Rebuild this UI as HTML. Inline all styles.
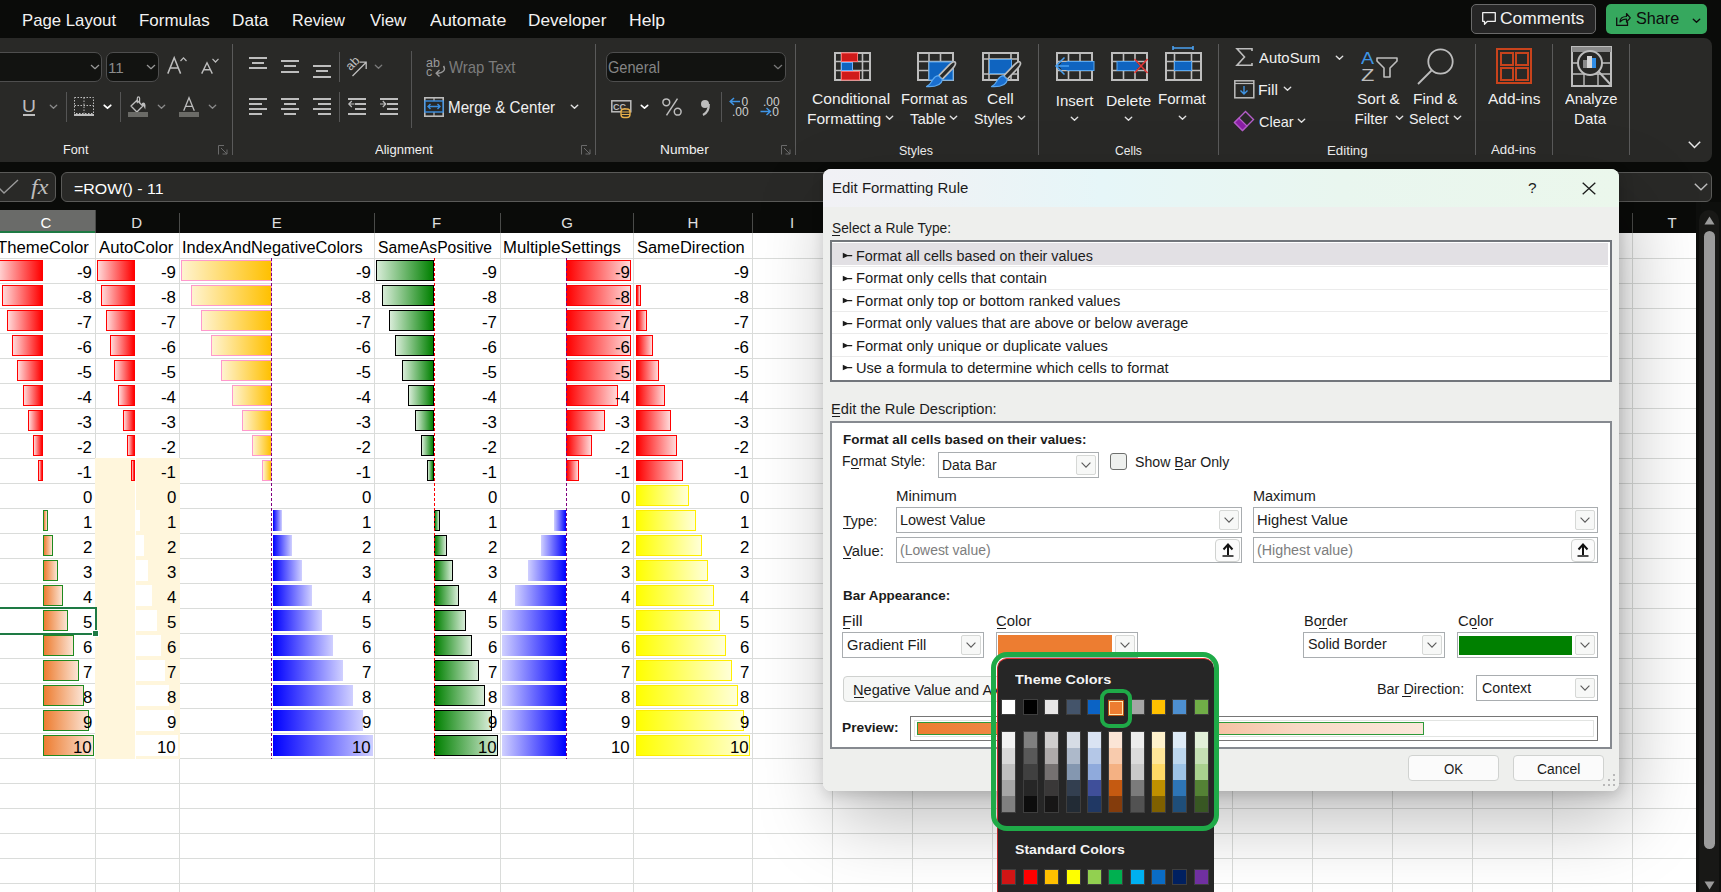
<!DOCTYPE html><html><head><meta charset="utf-8"><style>
html,body{margin:0;padding:0;}
body{width:1721px;height:892px;position:relative;overflow:hidden;background:#0a0b09;font-family:"Liberation Sans",sans-serif;}
body div{position:absolute;box-sizing:border-box;}
.t{white-space:pre;transform-origin:0 0;}
</style></head><body>
<div style="left:0px;top:0px;width:1721px;height:38px;background:#0a0b09"></div>
<div class="t" style="left:21.86px;top:11.55px;font-size:17px;line-height:17px;color:#f2f2f2;font-weight:400;font-family:'Liberation Sans',sans-serif;transform:scaleX(0.9850);">Page Layout</div>
<div class="t" style="left:138.84px;top:11.55px;font-size:17px;line-height:17px;color:#f2f2f2;font-weight:400;font-family:'Liberation Sans',sans-serif;transform:scaleX(0.9966);">Formulas</div>
<div class="t" style="left:231.92px;top:11.55px;font-size:17px;line-height:17px;color:#f2f2f2;font-weight:400;font-family:'Liberation Sans',sans-serif;transform:scaleX(1.0142);">Data</div>
<div class="t" style="left:292.01px;top:11.55px;font-size:17px;line-height:17px;color:#f2f2f2;font-weight:400;font-family:'Liberation Sans',sans-serif;transform:scaleX(0.9504);">Review</div>
<div class="t" style="left:370.12px;top:11.55px;font-size:17px;line-height:17px;color:#f2f2f2;font-weight:400;font-family:'Liberation Sans',sans-serif;transform:scaleX(0.9927);">View</div>
<div class="t" style="left:430.20px;top:11.55px;font-size:17px;line-height:17px;color:#f2f2f2;font-weight:400;font-family:'Liberation Sans',sans-serif;transform:scaleX(1.0501);">Automate</div>
<div class="t" style="left:528.02px;top:11.55px;font-size:17px;line-height:17px;color:#f2f2f2;font-weight:400;font-family:'Liberation Sans',sans-serif;transform:scaleX(1.0116);">Developer</div>
<div class="t" style="left:629.09px;top:11.55px;font-size:17px;line-height:17px;color:#f2f2f2;font-weight:400;font-family:'Liberation Sans',sans-serif;transform:scaleX(1.0336);">Help</div>
<div style="left:-20px;top:38px;width:1732px;height:124px;background:#292927;border-radius:8px"></div>
<div style="left:-20px;top:172px;width:76px;height:30px;background:#292927;border:1px solid #5a5a58;border-radius:6px"></div>
<div style="left:61px;top:172px;width:1651px;height:30px;background:#292927;border:1px solid #5a5a58;border-radius:6px"></div>
<div style="left:0px;top:210px;width:1696px;height:23px;background:#0a0b09"></div>
<div style="left:0px;top:233px;width:1696px;height:659px;background:#ffffff"></div>
<div style="left:1696px;top:202px;width:25px;height:690px;background:#0e0f0d"></div>
<div style="left:1699px;top:210px;width:20px;height:690px;background:#181816;border-radius:10px"></div>
<div style="left:1704px;top:231px;width:11px;height:618px;background:#9b9b9b;border-radius:6px"></div>
<svg style="position:absolute;left:1704px;top:216px;overflow:visible;" width="11" height="9" viewBox="0 0 11 9"><path d="M5.5 0.5 L10.5 8.5 H0.5 Z" fill="#9b9b9b"/></svg>
<svg style="position:absolute;left:1704px;top:881px;overflow:visible;" width="11" height="9" viewBox="0 0 11 9"><path d="M0.5 0.5 H10.5 L5.5 8.5 Z" fill="#9b9b9b"/></svg>
<div style="left:95px;top:233px;width:1px;height:659px;background:#dadcda"></div>
<div style="left:179px;top:233px;width:1px;height:659px;background:#dadcda"></div>
<div style="left:374px;top:233px;width:1px;height:659px;background:#dadcda"></div>
<div style="left:500px;top:233px;width:1px;height:659px;background:#dadcda"></div>
<div style="left:633px;top:233px;width:1px;height:659px;background:#dadcda"></div>
<div style="left:752px;top:233px;width:1px;height:659px;background:#dadcda"></div>
<div style="left:832px;top:233px;width:1px;height:659px;background:#dadcda"></div>
<div style="left:912px;top:233px;width:1px;height:659px;background:#dadcda"></div>
<div style="left:992px;top:233px;width:1px;height:659px;background:#dadcda"></div>
<div style="left:1072px;top:233px;width:1px;height:659px;background:#dadcda"></div>
<div style="left:1152px;top:233px;width:1px;height:659px;background:#dadcda"></div>
<div style="left:1232px;top:233px;width:1px;height:659px;background:#dadcda"></div>
<div style="left:1312px;top:233px;width:1px;height:659px;background:#dadcda"></div>
<div style="left:1392px;top:233px;width:1px;height:659px;background:#dadcda"></div>
<div style="left:1472px;top:233px;width:1px;height:659px;background:#dadcda"></div>
<div style="left:1552px;top:233px;width:1px;height:659px;background:#dadcda"></div>
<div style="left:1632px;top:233px;width:1px;height:659px;background:#dadcda"></div>
<div style="left:0px;top:258px;width:1696px;height:1px;background:#dadcda"></div>
<div style="left:0px;top:283px;width:1696px;height:1px;background:#dadcda"></div>
<div style="left:0px;top:308px;width:1696px;height:1px;background:#dadcda"></div>
<div style="left:0px;top:333px;width:1696px;height:1px;background:#dadcda"></div>
<div style="left:0px;top:358px;width:1696px;height:1px;background:#dadcda"></div>
<div style="left:0px;top:383px;width:1696px;height:1px;background:#dadcda"></div>
<div style="left:0px;top:408px;width:1696px;height:1px;background:#dadcda"></div>
<div style="left:0px;top:433px;width:1696px;height:1px;background:#dadcda"></div>
<div style="left:0px;top:458px;width:1696px;height:1px;background:#dadcda"></div>
<div style="left:0px;top:483px;width:1696px;height:1px;background:#dadcda"></div>
<div style="left:0px;top:508px;width:1696px;height:1px;background:#dadcda"></div>
<div style="left:0px;top:533px;width:1696px;height:1px;background:#dadcda"></div>
<div style="left:0px;top:558px;width:1696px;height:1px;background:#dadcda"></div>
<div style="left:0px;top:583px;width:1696px;height:1px;background:#dadcda"></div>
<div style="left:0px;top:608px;width:1696px;height:1px;background:#dadcda"></div>
<div style="left:0px;top:633px;width:1696px;height:1px;background:#dadcda"></div>
<div style="left:0px;top:658px;width:1696px;height:1px;background:#dadcda"></div>
<div style="left:0px;top:683px;width:1696px;height:1px;background:#dadcda"></div>
<div style="left:0px;top:708px;width:1696px;height:1px;background:#dadcda"></div>
<div style="left:0px;top:733px;width:1696px;height:1px;background:#dadcda"></div>
<div style="left:0px;top:758px;width:1696px;height:1px;background:#dadcda"></div>
<div style="left:0px;top:783px;width:1696px;height:1px;background:#dadcda"></div>
<div style="left:0px;top:808px;width:1696px;height:1px;background:#dadcda"></div>
<div style="left:0px;top:833px;width:1696px;height:1px;background:#dadcda"></div>
<div style="left:0px;top:858px;width:1696px;height:1px;background:#dadcda"></div>
<div style="left:0px;top:883px;width:1696px;height:1px;background:#dadcda"></div>
<div style="left:-10px;top:210px;width:106px;height:23px;background:#6a6b69"></div>
<div style="left:-10px;top:231px;width:106px;height:2px;background:#1e7a44"></div>
<div style="left:179px;top:213px;width:1px;height:20px;background:#4a4b49"></div>
<div style="left:374px;top:213px;width:1px;height:20px;background:#4a4b49"></div>
<div style="left:500px;top:213px;width:1px;height:20px;background:#4a4b49"></div>
<div style="left:633px;top:213px;width:1px;height:20px;background:#4a4b49"></div>
<div style="left:752px;top:213px;width:1px;height:20px;background:#4a4b49"></div>
<div style="left:1632px;top:213px;width:1px;height:20px;background:#4a4b49"></div>
<div style="left:95px;top:210px;width:1px;height:23px;background:#4a4b49"></div>
<div class="t" style="left:40.49px;top:215.25px;font-size:15px;line-height:15px;color:#ffffff;font-weight:400;font-family:'Liberation Sans',sans-serif;">C</div>
<div class="t" style="left:131.34px;top:215.25px;font-size:15px;line-height:15px;color:#e0e0e0;font-weight:400;font-family:'Liberation Sans',sans-serif;">D</div>
<div class="t" style="left:271.71px;top:215.25px;font-size:15px;line-height:15px;color:#e0e0e0;font-weight:400;font-family:'Liberation Sans',sans-serif;">E</div>
<div class="t" style="left:432.12px;top:215.25px;font-size:15px;line-height:15px;color:#e0e0e0;font-weight:400;font-family:'Liberation Sans',sans-serif;">F</div>
<div class="t" style="left:561.34px;top:215.25px;font-size:15px;line-height:15px;color:#e0e0e0;font-weight:400;font-family:'Liberation Sans',sans-serif;">G</div>
<div class="t" style="left:687.60px;top:215.25px;font-size:15px;line-height:15px;color:#e0e0e0;font-weight:400;font-family:'Liberation Sans',sans-serif;">H</div>
<div class="t" style="left:789.94px;top:215.25px;font-size:15px;line-height:15px;color:#e0e0e0;font-weight:400;font-family:'Liberation Sans',sans-serif;">I</div>
<div class="t" style="left:1667.42px;top:215.25px;font-size:15px;line-height:15px;color:#e0e0e0;font-weight:400;font-family:'Liberation Sans',sans-serif;">T</div>
<div class="t" style="left:-3.03px;top:239.57px;font-size:15.8px;line-height:15.8px;color:#000000;font-weight:400;font-family:'Liberation Sans',sans-serif;transform:scaleX(1.0574);">ThemeColor</div>
<div class="t" style="left:99.30px;top:239.57px;font-size:15.8px;line-height:15.8px;color:#000000;font-weight:400;font-family:'Liberation Sans',sans-serif;transform:scaleX(1.0572);">AutoColor</div>
<div class="t" style="left:181.93px;top:239.57px;font-size:15.8px;line-height:15.8px;color:#000000;font-weight:400;font-family:'Liberation Sans',sans-serif;transform:scaleX(1.0343);">IndexAndNegativeColors</div>
<div class="t" style="left:377.70px;top:239.57px;font-size:15.8px;line-height:15.8px;color:#000000;font-weight:400;font-family:'Liberation Sans',sans-serif;transform:scaleX(0.9912);">SameAsPositive</div>
<div class="t" style="left:503.16px;top:239.57px;font-size:15.8px;line-height:15.8px;color:#000000;font-weight:400;font-family:'Liberation Sans',sans-serif;transform:scaleX(1.0571);">MultipleSettings</div>
<div class="t" style="left:636.56px;top:239.57px;font-size:15.8px;line-height:15.8px;color:#000000;font-weight:400;font-family:'Liberation Sans',sans-serif;transform:scaleX(1.0400);">SameDirection</div>
<div style="left:95px;top:458px;width:85px;height:301px;background:#fff6dc"></div>
<div style="left:135px;top:458px;width:1px;height:301px;background:#ffffff"></div>
<div style="left:-3px;top:260px;width:46px;height:21px;background:linear-gradient(to left,#ff0000,#ffd9d9);border:1px solid #ff0000;"></div>
<div style="left:97px;top:260px;width:38px;height:21px;background:linear-gradient(to left,#ff0000,#ffd9d9);border:1px solid #ff0000;"></div>
<div style="left:181px;top:260px;width:91px;height:21px;background:linear-gradient(to left,#ffc000,#fff3d0);border:1px solid #ff99cc;"></div>
<div style="left:376px;top:260px;width:58px;height:21px;background:linear-gradient(to left,#008000,#d8ecd8);border:1px solid #000000;"></div>
<div style="left:566px;top:260px;width:65px;height:21px;background:linear-gradient(to right,#ff0000,#ffd9d9);border:1px solid #ff0000;"></div>
<div style="left:2px;top:285px;width:41px;height:21px;background:linear-gradient(to left,#ff0000,#ffd9d9);border:1px solid #ff0000;"></div>
<div style="left:101px;top:285px;width:34px;height:21px;background:linear-gradient(to left,#ff0000,#ffd9d9);border:1px solid #ff0000;"></div>
<div style="left:191px;top:285px;width:81px;height:21px;background:linear-gradient(to left,#ffc000,#fff3d0);border:1px solid #ff99cc;"></div>
<div style="left:382px;top:285px;width:52px;height:21px;background:linear-gradient(to left,#008000,#d8ecd8);border:1px solid #000000;"></div>
<div style="left:566px;top:285px;width:65px;height:21px;background:linear-gradient(to right,#ff0000,#ffd9d9);border:1px solid #ff0000;"></div>
<div style="left:636px;top:285px;width:5px;height:21px;background:linear-gradient(to right,#ff0000,#ffd9d9);border:1px solid #ff0000;"></div>
<div style="left:7px;top:310px;width:36px;height:21px;background:linear-gradient(to left,#ff0000,#ffd9d9);border:1px solid #ff0000;"></div>
<div style="left:106px;top:310px;width:29px;height:21px;background:linear-gradient(to left,#ff0000,#ffd9d9);border:1px solid #ff0000;"></div>
<div style="left:201px;top:310px;width:71px;height:21px;background:linear-gradient(to left,#ffc000,#fff3d0);border:1px solid #ff99cc;"></div>
<div style="left:389px;top:310px;width:45px;height:21px;background:linear-gradient(to left,#008000,#d8ecd8);border:1px solid #000000;"></div>
<div style="left:566px;top:310px;width:65px;height:21px;background:linear-gradient(to right,#ff0000,#ffd9d9);border:1px solid #ff0000;"></div>
<div style="left:636px;top:310px;width:11px;height:21px;background:linear-gradient(to right,#ff0000,#ffd9d9);border:1px solid #ff0000;"></div>
<div style="left:12px;top:335px;width:31px;height:21px;background:linear-gradient(to left,#ff0000,#ffd9d9);border:1px solid #ff0000;"></div>
<div style="left:110px;top:335px;width:25px;height:21px;background:linear-gradient(to left,#ff0000,#ffd9d9);border:1px solid #ff0000;"></div>
<div style="left:211px;top:335px;width:61px;height:21px;background:linear-gradient(to left,#ffc000,#fff3d0);border:1px solid #ff99cc;"></div>
<div style="left:395px;top:335px;width:39px;height:21px;background:linear-gradient(to left,#008000,#d8ecd8);border:1px solid #000000;"></div>
<div style="left:566px;top:335px;width:65px;height:21px;background:linear-gradient(to right,#ff0000,#ffd9d9);border:1px solid #ff0000;"></div>
<div style="left:636px;top:335px;width:17px;height:21px;background:linear-gradient(to right,#ff0000,#ffd9d9);border:1px solid #ff0000;"></div>
<div style="left:17px;top:360px;width:26px;height:21px;background:linear-gradient(to left,#ff0000,#ffd9d9);border:1px solid #ff0000;"></div>
<div style="left:114px;top:360px;width:21px;height:21px;background:linear-gradient(to left,#ff0000,#ffd9d9);border:1px solid #ff0000;"></div>
<div style="left:221px;top:360px;width:51px;height:21px;background:linear-gradient(to left,#ffc000,#fff3d0);border:1px solid #ff99cc;"></div>
<div style="left:402px;top:360px;width:32px;height:21px;background:linear-gradient(to left,#008000,#d8ecd8);border:1px solid #000000;"></div>
<div style="left:566px;top:360px;width:65px;height:21px;background:linear-gradient(to right,#ff0000,#ffd9d9);border:1px solid #ff0000;"></div>
<div style="left:636px;top:360px;width:23px;height:21px;background:linear-gradient(to right,#ff0000,#ffd9d9);border:1px solid #ff0000;"></div>
<div style="left:23px;top:385px;width:20px;height:21px;background:linear-gradient(to left,#ff0000,#ffd9d9);border:1px solid #ff0000;"></div>
<div style="left:118px;top:385px;width:17px;height:21px;background:linear-gradient(to left,#ff0000,#ffd9d9);border:1px solid #ff0000;"></div>
<div style="left:232px;top:385px;width:40px;height:21px;background:linear-gradient(to left,#ffc000,#fff3d0);border:1px solid #ff99cc;"></div>
<div style="left:408px;top:385px;width:26px;height:21px;background:linear-gradient(to left,#008000,#d8ecd8);border:1px solid #000000;"></div>
<div style="left:566px;top:385px;width:52px;height:21px;background:linear-gradient(to right,#ff0000,#ffd9d9);border:1px solid #ff0000;"></div>
<div style="left:636px;top:385px;width:29px;height:21px;background:linear-gradient(to right,#ff0000,#ffd9d9);border:1px solid #ff0000;"></div>
<div style="left:28px;top:410px;width:15px;height:21px;background:linear-gradient(to left,#ff0000,#ffd9d9);border:1px solid #ff0000;"></div>
<div style="left:123px;top:410px;width:12px;height:21px;background:linear-gradient(to left,#ff0000,#ffd9d9);border:1px solid #ff0000;"></div>
<div style="left:242px;top:410px;width:30px;height:21px;background:linear-gradient(to left,#ffc000,#fff3d0);border:1px solid #ff99cc;"></div>
<div style="left:415px;top:410px;width:19px;height:21px;background:linear-gradient(to left,#008000,#d8ecd8);border:1px solid #000000;"></div>
<div style="left:566px;top:410px;width:39px;height:21px;background:linear-gradient(to right,#ff0000,#ffd9d9);border:1px solid #ff0000;"></div>
<div style="left:636px;top:410px;width:35px;height:21px;background:linear-gradient(to right,#ff0000,#ffd9d9);border:1px solid #ff0000;"></div>
<div style="left:33px;top:435px;width:10px;height:21px;background:linear-gradient(to left,#ff0000,#ffd9d9);border:1px solid #ff0000;"></div>
<div style="left:127px;top:435px;width:8px;height:21px;background:linear-gradient(to left,#ff0000,#ffd9d9);border:1px solid #ff0000;"></div>
<div style="left:252px;top:435px;width:20px;height:21px;background:linear-gradient(to left,#ffc000,#fff3d0);border:1px solid #ff99cc;"></div>
<div style="left:421px;top:435px;width:13px;height:21px;background:linear-gradient(to left,#008000,#d8ecd8);border:1px solid #000000;"></div>
<div style="left:566px;top:435px;width:26px;height:21px;background:linear-gradient(to right,#ff0000,#ffd9d9);border:1px solid #ff0000;"></div>
<div style="left:636px;top:435px;width:41px;height:21px;background:linear-gradient(to right,#ff0000,#ffd9d9);border:1px solid #ff0000;"></div>
<div style="left:38px;top:460px;width:5px;height:21px;background:linear-gradient(to left,#ff0000,#ffd9d9);border:1px solid #ff0000;"></div>
<div style="left:131px;top:460px;width:4px;height:21px;background:linear-gradient(to left,#ff0000,#ffd9d9);border:1px solid #ff0000;"></div>
<div style="left:262px;top:460px;width:10px;height:21px;background:linear-gradient(to left,#ffc000,#fff3d0);border:1px solid #ff99cc;"></div>
<div style="left:427px;top:460px;width:7px;height:21px;background:linear-gradient(to left,#008000,#d8ecd8);border:1px solid #000000;"></div>
<div style="left:566px;top:460px;width:13px;height:21px;background:linear-gradient(to right,#ff0000,#ffd9d9);border:1px solid #ff0000;"></div>
<div style="left:636px;top:460px;width:47px;height:21px;background:linear-gradient(to right,#ff0000,#ffd9d9);border:1px solid #ff0000;"></div>
<div style="left:636px;top:485px;width:53px;height:21px;background:linear-gradient(to right,#ffff00,#ffffd8);border:1px solid #ffee00;"></div>
<div style="left:43px;top:510px;width:5px;height:21px;background:linear-gradient(to right,#ed7d31,#fbe4d5);border:1px solid #1f8a1f;"></div>
<div style="left:136px;top:510px;width:4px;height:21px;background:#ffffff"></div>
<div style="left:273px;top:510px;width:9px;height:21px;background:linear-gradient(to right,#0000ff,#d0d0ff);"></div>
<div style="left:434px;top:510px;width:6px;height:21px;background:linear-gradient(to right,#008000,#d8ecd8);border:1px solid #000000;"></div>
<div style="left:554px;top:510px;width:12px;height:21px;background:linear-gradient(to left,#0000ff,#d0d0ff);"></div>
<div style="left:636px;top:510px;width:60px;height:21px;background:linear-gradient(to right,#ffff00,#ffffd8);border:1px solid #ffee00;"></div>
<div style="left:43px;top:535px;width:10px;height:21px;background:linear-gradient(to right,#ed7d31,#fbe4d5);border:1px solid #1f8a1f;"></div>
<div style="left:136px;top:535px;width:8px;height:21px;background:#ffffff"></div>
<div style="left:273px;top:535px;width:19px;height:21px;background:linear-gradient(to right,#0000ff,#d0d0ff);"></div>
<div style="left:434px;top:535px;width:13px;height:21px;background:linear-gradient(to right,#008000,#d8ecd8);border:1px solid #000000;"></div>
<div style="left:541px;top:535px;width:25px;height:21px;background:linear-gradient(to left,#0000ff,#d0d0ff);"></div>
<div style="left:636px;top:535px;width:66px;height:21px;background:linear-gradient(to right,#ffff00,#ffffd8);border:1px solid #ffee00;"></div>
<div style="left:43px;top:560px;width:15px;height:21px;background:linear-gradient(to right,#ed7d31,#fbe4d5);border:1px solid #1f8a1f;"></div>
<div style="left:136px;top:560px;width:12px;height:21px;background:#ffffff"></div>
<div style="left:273px;top:560px;width:29px;height:21px;background:linear-gradient(to right,#0000ff,#d0d0ff);"></div>
<div style="left:434px;top:560px;width:19px;height:21px;background:linear-gradient(to right,#008000,#d8ecd8);border:1px solid #000000;"></div>
<div style="left:528px;top:560px;width:38px;height:21px;background:linear-gradient(to left,#0000ff,#d0d0ff);"></div>
<div style="left:636px;top:560px;width:72px;height:21px;background:linear-gradient(to right,#ffff00,#ffffd8);border:1px solid #ffee00;"></div>
<div style="left:43px;top:585px;width:20px;height:21px;background:linear-gradient(to right,#ed7d31,#fbe4d5);border:1px solid #1f8a1f;"></div>
<div style="left:136px;top:585px;width:16px;height:21px;background:#ffffff"></div>
<div style="left:273px;top:585px;width:39px;height:21px;background:linear-gradient(to right,#0000ff,#d0d0ff);"></div>
<div style="left:434px;top:585px;width:25px;height:21px;background:linear-gradient(to right,#008000,#d8ecd8);border:1px solid #000000;"></div>
<div style="left:515px;top:585px;width:51px;height:21px;background:linear-gradient(to left,#0000ff,#d0d0ff);"></div>
<div style="left:636px;top:585px;width:78px;height:21px;background:linear-gradient(to right,#ffff00,#ffffd8);border:1px solid #ffee00;"></div>
<div style="left:43px;top:610px;width:25px;height:21px;background:linear-gradient(to right,#ed7d31,#fbe4d5);border:1px solid #1f8a1f;"></div>
<div style="left:136px;top:610px;width:21px;height:21px;background:#ffffff"></div>
<div style="left:273px;top:610px;width:49px;height:21px;background:linear-gradient(to right,#0000ff,#d0d0ff);"></div>
<div style="left:434px;top:610px;width:32px;height:21px;background:linear-gradient(to right,#008000,#d8ecd8);border:1px solid #000000;"></div>
<div style="left:502px;top:610px;width:64px;height:21px;background:linear-gradient(to left,#0000ff,#d0d0ff);"></div>
<div style="left:636px;top:610px;width:84px;height:21px;background:linear-gradient(to right,#ffff00,#ffffd8);border:1px solid #ffee00;"></div>
<div style="left:43px;top:635px;width:31px;height:21px;background:linear-gradient(to right,#ed7d31,#fbe4d5);border:1px solid #1f8a1f;"></div>
<div style="left:136px;top:635px;width:25px;height:21px;background:#ffffff"></div>
<div style="left:273px;top:635px;width:60px;height:21px;background:linear-gradient(to right,#0000ff,#d0d0ff);"></div>
<div style="left:434px;top:635px;width:38px;height:21px;background:linear-gradient(to right,#008000,#d8ecd8);border:1px solid #000000;"></div>
<div style="left:502px;top:635px;width:64px;height:21px;background:linear-gradient(to left,#0000ff,#d0d0ff);"></div>
<div style="left:636px;top:635px;width:90px;height:21px;background:linear-gradient(to right,#ffff00,#ffffd8);border:1px solid #ffee00;"></div>
<div style="left:43px;top:660px;width:36px;height:21px;background:linear-gradient(to right,#ed7d31,#fbe4d5);border:1px solid #1f8a1f;"></div>
<div style="left:136px;top:660px;width:29px;height:21px;background:#ffffff"></div>
<div style="left:273px;top:660px;width:70px;height:21px;background:linear-gradient(to right,#0000ff,#d0d0ff);"></div>
<div style="left:434px;top:660px;width:45px;height:21px;background:linear-gradient(to right,#008000,#d8ecd8);border:1px solid #000000;"></div>
<div style="left:502px;top:660px;width:64px;height:21px;background:linear-gradient(to left,#0000ff,#d0d0ff);"></div>
<div style="left:636px;top:660px;width:96px;height:21px;background:linear-gradient(to right,#ffff00,#ffffd8);border:1px solid #ffee00;"></div>
<div style="left:43px;top:685px;width:41px;height:21px;background:linear-gradient(to right,#ed7d31,#fbe4d5);border:1px solid #1f8a1f;"></div>
<div style="left:136px;top:685px;width:33px;height:21px;background:#ffffff"></div>
<div style="left:273px;top:685px;width:80px;height:21px;background:linear-gradient(to right,#0000ff,#d0d0ff);"></div>
<div style="left:434px;top:685px;width:51px;height:21px;background:linear-gradient(to right,#008000,#d8ecd8);border:1px solid #000000;"></div>
<div style="left:502px;top:685px;width:64px;height:21px;background:linear-gradient(to left,#0000ff,#d0d0ff);"></div>
<div style="left:636px;top:685px;width:102px;height:21px;background:linear-gradient(to right,#ffff00,#ffffd8);border:1px solid #ffee00;"></div>
<div style="left:43px;top:710px;width:46px;height:21px;background:linear-gradient(to right,#ed7d31,#fbe4d5);border:1px solid #1f8a1f;"></div>
<div style="left:136px;top:710px;width:38px;height:21px;background:#ffffff"></div>
<div style="left:273px;top:710px;width:90px;height:21px;background:linear-gradient(to right,#0000ff,#d0d0ff);"></div>
<div style="left:434px;top:710px;width:58px;height:21px;background:linear-gradient(to right,#008000,#d8ecd8);border:1px solid #000000;"></div>
<div style="left:502px;top:710px;width:64px;height:21px;background:linear-gradient(to left,#0000ff,#d0d0ff);"></div>
<div style="left:636px;top:710px;width:108px;height:21px;background:linear-gradient(to right,#ffff00,#ffffd8);border:1px solid #ffee00;"></div>
<div style="left:43px;top:735px;width:51px;height:21px;background:linear-gradient(to right,#ed7d31,#fbe4d5);border:1px solid #1f8a1f;"></div>
<div style="left:136px;top:735px;width:42px;height:21px;background:#ffffff"></div>
<div style="left:273px;top:735px;width:100px;height:21px;background:linear-gradient(to right,#0000ff,#d0d0ff);"></div>
<div style="left:434px;top:735px;width:64px;height:21px;background:linear-gradient(to right,#008000,#d8ecd8);border:1px solid #000000;"></div>
<div style="left:502px;top:735px;width:64px;height:21px;background:linear-gradient(to left,#0000ff,#d0d0ff);"></div>
<div style="left:636px;top:735px;width:114px;height:21px;background:linear-gradient(to right,#ffff00,#ffffd8);border:1px solid #ffee00;"></div>
<div style="left:271px;top:258px;width:1px;height:501px;background:repeating-linear-gradient(to bottom,#800080 0 3px,transparent 3px 5px)"></div>
<div style="left:434px;top:258px;width:1px;height:501px;background:repeating-linear-gradient(to bottom,#ff0000 0 3px,transparent 3px 5px)"></div>
<div style="left:566px;top:258px;width:1px;height:501px;background:repeating-linear-gradient(to bottom,#800080 0 3px,transparent 3px 5px)"></div>
<div class="t" style="left:77.21px;top:264.57px;font-size:15.8px;line-height:15.8px;color:#000000;font-weight:400;font-family:'Liberation Sans',sans-serif;transform:scaleX(1.0630);">-9</div>
<div class="t" style="left:161.21px;top:264.57px;font-size:15.8px;line-height:15.8px;color:#000000;font-weight:400;font-family:'Liberation Sans',sans-serif;transform:scaleX(1.0630);">-9</div>
<div class="t" style="left:356.21px;top:264.57px;font-size:15.8px;line-height:15.8px;color:#000000;font-weight:400;font-family:'Liberation Sans',sans-serif;transform:scaleX(1.0630);">-9</div>
<div class="t" style="left:482.21px;top:264.57px;font-size:15.8px;line-height:15.8px;color:#000000;font-weight:400;font-family:'Liberation Sans',sans-serif;transform:scaleX(1.0630);">-9</div>
<div class="t" style="left:615.21px;top:264.57px;font-size:15.8px;line-height:15.8px;color:#000000;font-weight:400;font-family:'Liberation Sans',sans-serif;transform:scaleX(1.0630);">-9</div>
<div class="t" style="left:734.21px;top:264.57px;font-size:15.8px;line-height:15.8px;color:#000000;font-weight:400;font-family:'Liberation Sans',sans-serif;transform:scaleX(1.0630);">-9</div>
<div class="t" style="left:77.12px;top:289.57px;font-size:15.8px;line-height:15.8px;color:#000000;font-weight:400;font-family:'Liberation Sans',sans-serif;transform:scaleX(1.0630);">-8</div>
<div class="t" style="left:161.12px;top:289.57px;font-size:15.8px;line-height:15.8px;color:#000000;font-weight:400;font-family:'Liberation Sans',sans-serif;transform:scaleX(1.0630);">-8</div>
<div class="t" style="left:356.12px;top:289.57px;font-size:15.8px;line-height:15.8px;color:#000000;font-weight:400;font-family:'Liberation Sans',sans-serif;transform:scaleX(1.0630);">-8</div>
<div class="t" style="left:482.12px;top:289.57px;font-size:15.8px;line-height:15.8px;color:#000000;font-weight:400;font-family:'Liberation Sans',sans-serif;transform:scaleX(1.0630);">-8</div>
<div class="t" style="left:615.12px;top:289.57px;font-size:15.8px;line-height:15.8px;color:#000000;font-weight:400;font-family:'Liberation Sans',sans-serif;transform:scaleX(1.0630);">-8</div>
<div class="t" style="left:734.12px;top:289.57px;font-size:15.8px;line-height:15.8px;color:#000000;font-weight:400;font-family:'Liberation Sans',sans-serif;transform:scaleX(1.0630);">-8</div>
<div class="t" style="left:77.29px;top:314.57px;font-size:15.8px;line-height:15.8px;color:#000000;font-weight:400;font-family:'Liberation Sans',sans-serif;transform:scaleX(1.0630);">-7</div>
<div class="t" style="left:161.29px;top:314.57px;font-size:15.8px;line-height:15.8px;color:#000000;font-weight:400;font-family:'Liberation Sans',sans-serif;transform:scaleX(1.0630);">-7</div>
<div class="t" style="left:356.29px;top:314.57px;font-size:15.8px;line-height:15.8px;color:#000000;font-weight:400;font-family:'Liberation Sans',sans-serif;transform:scaleX(1.0630);">-7</div>
<div class="t" style="left:482.29px;top:314.57px;font-size:15.8px;line-height:15.8px;color:#000000;font-weight:400;font-family:'Liberation Sans',sans-serif;transform:scaleX(1.0630);">-7</div>
<div class="t" style="left:615.29px;top:314.57px;font-size:15.8px;line-height:15.8px;color:#000000;font-weight:400;font-family:'Liberation Sans',sans-serif;transform:scaleX(1.0630);">-7</div>
<div class="t" style="left:734.29px;top:314.57px;font-size:15.8px;line-height:15.8px;color:#000000;font-weight:400;font-family:'Liberation Sans',sans-serif;transform:scaleX(1.0630);">-7</div>
<div class="t" style="left:77.12px;top:339.57px;font-size:15.8px;line-height:15.8px;color:#000000;font-weight:400;font-family:'Liberation Sans',sans-serif;transform:scaleX(1.0630);">-6</div>
<div class="t" style="left:161.12px;top:339.57px;font-size:15.8px;line-height:15.8px;color:#000000;font-weight:400;font-family:'Liberation Sans',sans-serif;transform:scaleX(1.0630);">-6</div>
<div class="t" style="left:356.12px;top:339.57px;font-size:15.8px;line-height:15.8px;color:#000000;font-weight:400;font-family:'Liberation Sans',sans-serif;transform:scaleX(1.0630);">-6</div>
<div class="t" style="left:482.12px;top:339.57px;font-size:15.8px;line-height:15.8px;color:#000000;font-weight:400;font-family:'Liberation Sans',sans-serif;transform:scaleX(1.0630);">-6</div>
<div class="t" style="left:615.12px;top:339.57px;font-size:15.8px;line-height:15.8px;color:#000000;font-weight:400;font-family:'Liberation Sans',sans-serif;transform:scaleX(1.0630);">-6</div>
<div class="t" style="left:734.12px;top:339.57px;font-size:15.8px;line-height:15.8px;color:#000000;font-weight:400;font-family:'Liberation Sans',sans-serif;transform:scaleX(1.0630);">-6</div>
<div class="t" style="left:77.12px;top:364.57px;font-size:15.8px;line-height:15.8px;color:#000000;font-weight:400;font-family:'Liberation Sans',sans-serif;transform:scaleX(1.0630);">-5</div>
<div class="t" style="left:161.12px;top:364.57px;font-size:15.8px;line-height:15.8px;color:#000000;font-weight:400;font-family:'Liberation Sans',sans-serif;transform:scaleX(1.0630);">-5</div>
<div class="t" style="left:356.12px;top:364.57px;font-size:15.8px;line-height:15.8px;color:#000000;font-weight:400;font-family:'Liberation Sans',sans-serif;transform:scaleX(1.0630);">-5</div>
<div class="t" style="left:482.12px;top:364.57px;font-size:15.8px;line-height:15.8px;color:#000000;font-weight:400;font-family:'Liberation Sans',sans-serif;transform:scaleX(1.0630);">-5</div>
<div class="t" style="left:615.12px;top:364.57px;font-size:15.8px;line-height:15.8px;color:#000000;font-weight:400;font-family:'Liberation Sans',sans-serif;transform:scaleX(1.0630);">-5</div>
<div class="t" style="left:734.12px;top:364.57px;font-size:15.8px;line-height:15.8px;color:#000000;font-weight:400;font-family:'Liberation Sans',sans-serif;transform:scaleX(1.0630);">-5</div>
<div class="t" style="left:76.96px;top:389.57px;font-size:15.8px;line-height:15.8px;color:#000000;font-weight:400;font-family:'Liberation Sans',sans-serif;transform:scaleX(1.0630);">-4</div>
<div class="t" style="left:160.96px;top:389.57px;font-size:15.8px;line-height:15.8px;color:#000000;font-weight:400;font-family:'Liberation Sans',sans-serif;transform:scaleX(1.0630);">-4</div>
<div class="t" style="left:355.96px;top:389.57px;font-size:15.8px;line-height:15.8px;color:#000000;font-weight:400;font-family:'Liberation Sans',sans-serif;transform:scaleX(1.0630);">-4</div>
<div class="t" style="left:481.96px;top:389.57px;font-size:15.8px;line-height:15.8px;color:#000000;font-weight:400;font-family:'Liberation Sans',sans-serif;transform:scaleX(1.0630);">-4</div>
<div class="t" style="left:614.96px;top:389.57px;font-size:15.8px;line-height:15.8px;color:#000000;font-weight:400;font-family:'Liberation Sans',sans-serif;transform:scaleX(1.0630);">-4</div>
<div class="t" style="left:733.96px;top:389.57px;font-size:15.8px;line-height:15.8px;color:#000000;font-weight:400;font-family:'Liberation Sans',sans-serif;transform:scaleX(1.0630);">-4</div>
<div class="t" style="left:77.12px;top:414.57px;font-size:15.8px;line-height:15.8px;color:#000000;font-weight:400;font-family:'Liberation Sans',sans-serif;transform:scaleX(1.0630);">-3</div>
<div class="t" style="left:161.12px;top:414.57px;font-size:15.8px;line-height:15.8px;color:#000000;font-weight:400;font-family:'Liberation Sans',sans-serif;transform:scaleX(1.0630);">-3</div>
<div class="t" style="left:356.12px;top:414.57px;font-size:15.8px;line-height:15.8px;color:#000000;font-weight:400;font-family:'Liberation Sans',sans-serif;transform:scaleX(1.0630);">-3</div>
<div class="t" style="left:482.12px;top:414.57px;font-size:15.8px;line-height:15.8px;color:#000000;font-weight:400;font-family:'Liberation Sans',sans-serif;transform:scaleX(1.0630);">-3</div>
<div class="t" style="left:615.12px;top:414.57px;font-size:15.8px;line-height:15.8px;color:#000000;font-weight:400;font-family:'Liberation Sans',sans-serif;transform:scaleX(1.0630);">-3</div>
<div class="t" style="left:734.12px;top:414.57px;font-size:15.8px;line-height:15.8px;color:#000000;font-weight:400;font-family:'Liberation Sans',sans-serif;transform:scaleX(1.0630);">-3</div>
<div class="t" style="left:77.29px;top:439.57px;font-size:15.8px;line-height:15.8px;color:#000000;font-weight:400;font-family:'Liberation Sans',sans-serif;transform:scaleX(1.0630);">-2</div>
<div class="t" style="left:161.29px;top:439.57px;font-size:15.8px;line-height:15.8px;color:#000000;font-weight:400;font-family:'Liberation Sans',sans-serif;transform:scaleX(1.0630);">-2</div>
<div class="t" style="left:356.29px;top:439.57px;font-size:15.8px;line-height:15.8px;color:#000000;font-weight:400;font-family:'Liberation Sans',sans-serif;transform:scaleX(1.0630);">-2</div>
<div class="t" style="left:482.29px;top:439.57px;font-size:15.8px;line-height:15.8px;color:#000000;font-weight:400;font-family:'Liberation Sans',sans-serif;transform:scaleX(1.0630);">-2</div>
<div class="t" style="left:615.29px;top:439.57px;font-size:15.8px;line-height:15.8px;color:#000000;font-weight:400;font-family:'Liberation Sans',sans-serif;transform:scaleX(1.0630);">-2</div>
<div class="t" style="left:734.29px;top:439.57px;font-size:15.8px;line-height:15.8px;color:#000000;font-weight:400;font-family:'Liberation Sans',sans-serif;transform:scaleX(1.0630);">-2</div>
<div class="t" style="left:77.21px;top:464.57px;font-size:15.8px;line-height:15.8px;color:#000000;font-weight:400;font-family:'Liberation Sans',sans-serif;transform:scaleX(1.0630);">-1</div>
<div class="t" style="left:161.21px;top:464.57px;font-size:15.8px;line-height:15.8px;color:#000000;font-weight:400;font-family:'Liberation Sans',sans-serif;transform:scaleX(1.0630);">-1</div>
<div class="t" style="left:356.21px;top:464.57px;font-size:15.8px;line-height:15.8px;color:#000000;font-weight:400;font-family:'Liberation Sans',sans-serif;transform:scaleX(1.0630);">-1</div>
<div class="t" style="left:482.21px;top:464.57px;font-size:15.8px;line-height:15.8px;color:#000000;font-weight:400;font-family:'Liberation Sans',sans-serif;transform:scaleX(1.0630);">-1</div>
<div class="t" style="left:615.21px;top:464.57px;font-size:15.8px;line-height:15.8px;color:#000000;font-weight:400;font-family:'Liberation Sans',sans-serif;transform:scaleX(1.0630);">-1</div>
<div class="t" style="left:734.21px;top:464.57px;font-size:15.8px;line-height:15.8px;color:#000000;font-weight:400;font-family:'Liberation Sans',sans-serif;transform:scaleX(1.0630);">-1</div>
<div class="t" style="left:82.67px;top:489.57px;font-size:15.8px;line-height:15.8px;color:#000000;font-weight:400;font-family:'Liberation Sans',sans-serif;transform:scaleX(1.0630);">0</div>
<div class="t" style="left:166.67px;top:489.57px;font-size:15.8px;line-height:15.8px;color:#000000;font-weight:400;font-family:'Liberation Sans',sans-serif;transform:scaleX(1.0630);">0</div>
<div class="t" style="left:361.67px;top:489.57px;font-size:15.8px;line-height:15.8px;color:#000000;font-weight:400;font-family:'Liberation Sans',sans-serif;transform:scaleX(1.0630);">0</div>
<div class="t" style="left:487.67px;top:489.57px;font-size:15.8px;line-height:15.8px;color:#000000;font-weight:400;font-family:'Liberation Sans',sans-serif;transform:scaleX(1.0630);">0</div>
<div class="t" style="left:620.67px;top:489.57px;font-size:15.8px;line-height:15.8px;color:#000000;font-weight:400;font-family:'Liberation Sans',sans-serif;transform:scaleX(1.0630);">0</div>
<div class="t" style="left:739.67px;top:489.57px;font-size:15.8px;line-height:15.8px;color:#000000;font-weight:400;font-family:'Liberation Sans',sans-serif;transform:scaleX(1.0630);">0</div>
<div class="t" style="left:82.83px;top:514.57px;font-size:15.8px;line-height:15.8px;color:#000000;font-weight:400;font-family:'Liberation Sans',sans-serif;transform:scaleX(1.0630);">1</div>
<div class="t" style="left:166.83px;top:514.57px;font-size:15.8px;line-height:15.8px;color:#000000;font-weight:400;font-family:'Liberation Sans',sans-serif;transform:scaleX(1.0630);">1</div>
<div class="t" style="left:361.83px;top:514.57px;font-size:15.8px;line-height:15.8px;color:#000000;font-weight:400;font-family:'Liberation Sans',sans-serif;transform:scaleX(1.0630);">1</div>
<div class="t" style="left:487.83px;top:514.57px;font-size:15.8px;line-height:15.8px;color:#000000;font-weight:400;font-family:'Liberation Sans',sans-serif;transform:scaleX(1.0630);">1</div>
<div class="t" style="left:620.83px;top:514.57px;font-size:15.8px;line-height:15.8px;color:#000000;font-weight:400;font-family:'Liberation Sans',sans-serif;transform:scaleX(1.0630);">1</div>
<div class="t" style="left:739.83px;top:514.57px;font-size:15.8px;line-height:15.8px;color:#000000;font-weight:400;font-family:'Liberation Sans',sans-serif;transform:scaleX(1.0630);">1</div>
<div class="t" style="left:82.92px;top:539.57px;font-size:15.8px;line-height:15.8px;color:#000000;font-weight:400;font-family:'Liberation Sans',sans-serif;transform:scaleX(1.0630);">2</div>
<div class="t" style="left:166.92px;top:539.57px;font-size:15.8px;line-height:15.8px;color:#000000;font-weight:400;font-family:'Liberation Sans',sans-serif;transform:scaleX(1.0630);">2</div>
<div class="t" style="left:361.92px;top:539.57px;font-size:15.8px;line-height:15.8px;color:#000000;font-weight:400;font-family:'Liberation Sans',sans-serif;transform:scaleX(1.0630);">2</div>
<div class="t" style="left:487.92px;top:539.57px;font-size:15.8px;line-height:15.8px;color:#000000;font-weight:400;font-family:'Liberation Sans',sans-serif;transform:scaleX(1.0630);">2</div>
<div class="t" style="left:620.92px;top:539.57px;font-size:15.8px;line-height:15.8px;color:#000000;font-weight:400;font-family:'Liberation Sans',sans-serif;transform:scaleX(1.0630);">2</div>
<div class="t" style="left:739.92px;top:539.57px;font-size:15.8px;line-height:15.8px;color:#000000;font-weight:400;font-family:'Liberation Sans',sans-serif;transform:scaleX(1.0630);">2</div>
<div class="t" style="left:82.75px;top:564.57px;font-size:15.8px;line-height:15.8px;color:#000000;font-weight:400;font-family:'Liberation Sans',sans-serif;transform:scaleX(1.0630);">3</div>
<div class="t" style="left:166.75px;top:564.57px;font-size:15.8px;line-height:15.8px;color:#000000;font-weight:400;font-family:'Liberation Sans',sans-serif;transform:scaleX(1.0630);">3</div>
<div class="t" style="left:361.75px;top:564.57px;font-size:15.8px;line-height:15.8px;color:#000000;font-weight:400;font-family:'Liberation Sans',sans-serif;transform:scaleX(1.0630);">3</div>
<div class="t" style="left:487.75px;top:564.57px;font-size:15.8px;line-height:15.8px;color:#000000;font-weight:400;font-family:'Liberation Sans',sans-serif;transform:scaleX(1.0630);">3</div>
<div class="t" style="left:620.75px;top:564.57px;font-size:15.8px;line-height:15.8px;color:#000000;font-weight:400;font-family:'Liberation Sans',sans-serif;transform:scaleX(1.0630);">3</div>
<div class="t" style="left:739.75px;top:564.57px;font-size:15.8px;line-height:15.8px;color:#000000;font-weight:400;font-family:'Liberation Sans',sans-serif;transform:scaleX(1.0630);">3</div>
<div class="t" style="left:82.58px;top:589.57px;font-size:15.8px;line-height:15.8px;color:#000000;font-weight:400;font-family:'Liberation Sans',sans-serif;transform:scaleX(1.0630);">4</div>
<div class="t" style="left:166.58px;top:589.57px;font-size:15.8px;line-height:15.8px;color:#000000;font-weight:400;font-family:'Liberation Sans',sans-serif;transform:scaleX(1.0630);">4</div>
<div class="t" style="left:361.58px;top:589.57px;font-size:15.8px;line-height:15.8px;color:#000000;font-weight:400;font-family:'Liberation Sans',sans-serif;transform:scaleX(1.0630);">4</div>
<div class="t" style="left:487.58px;top:589.57px;font-size:15.8px;line-height:15.8px;color:#000000;font-weight:400;font-family:'Liberation Sans',sans-serif;transform:scaleX(1.0630);">4</div>
<div class="t" style="left:620.58px;top:589.57px;font-size:15.8px;line-height:15.8px;color:#000000;font-weight:400;font-family:'Liberation Sans',sans-serif;transform:scaleX(1.0630);">4</div>
<div class="t" style="left:739.58px;top:589.57px;font-size:15.8px;line-height:15.8px;color:#000000;font-weight:400;font-family:'Liberation Sans',sans-serif;transform:scaleX(1.0630);">4</div>
<div class="t" style="left:82.75px;top:614.57px;font-size:15.8px;line-height:15.8px;color:#000000;font-weight:400;font-family:'Liberation Sans',sans-serif;transform:scaleX(1.0630);">5</div>
<div class="t" style="left:166.75px;top:614.57px;font-size:15.8px;line-height:15.8px;color:#000000;font-weight:400;font-family:'Liberation Sans',sans-serif;transform:scaleX(1.0630);">5</div>
<div class="t" style="left:361.75px;top:614.57px;font-size:15.8px;line-height:15.8px;color:#000000;font-weight:400;font-family:'Liberation Sans',sans-serif;transform:scaleX(1.0630);">5</div>
<div class="t" style="left:487.75px;top:614.57px;font-size:15.8px;line-height:15.8px;color:#000000;font-weight:400;font-family:'Liberation Sans',sans-serif;transform:scaleX(1.0630);">5</div>
<div class="t" style="left:620.75px;top:614.57px;font-size:15.8px;line-height:15.8px;color:#000000;font-weight:400;font-family:'Liberation Sans',sans-serif;transform:scaleX(1.0630);">5</div>
<div class="t" style="left:739.75px;top:614.57px;font-size:15.8px;line-height:15.8px;color:#000000;font-weight:400;font-family:'Liberation Sans',sans-serif;transform:scaleX(1.0630);">5</div>
<div class="t" style="left:82.75px;top:639.57px;font-size:15.8px;line-height:15.8px;color:#000000;font-weight:400;font-family:'Liberation Sans',sans-serif;transform:scaleX(1.0630);">6</div>
<div class="t" style="left:166.75px;top:639.57px;font-size:15.8px;line-height:15.8px;color:#000000;font-weight:400;font-family:'Liberation Sans',sans-serif;transform:scaleX(1.0630);">6</div>
<div class="t" style="left:361.75px;top:639.57px;font-size:15.8px;line-height:15.8px;color:#000000;font-weight:400;font-family:'Liberation Sans',sans-serif;transform:scaleX(1.0630);">6</div>
<div class="t" style="left:487.75px;top:639.57px;font-size:15.8px;line-height:15.8px;color:#000000;font-weight:400;font-family:'Liberation Sans',sans-serif;transform:scaleX(1.0630);">6</div>
<div class="t" style="left:620.75px;top:639.57px;font-size:15.8px;line-height:15.8px;color:#000000;font-weight:400;font-family:'Liberation Sans',sans-serif;transform:scaleX(1.0630);">6</div>
<div class="t" style="left:739.75px;top:639.57px;font-size:15.8px;line-height:15.8px;color:#000000;font-weight:400;font-family:'Liberation Sans',sans-serif;transform:scaleX(1.0630);">6</div>
<div class="t" style="left:82.92px;top:664.57px;font-size:15.8px;line-height:15.8px;color:#000000;font-weight:400;font-family:'Liberation Sans',sans-serif;transform:scaleX(1.0630);">7</div>
<div class="t" style="left:166.92px;top:664.57px;font-size:15.8px;line-height:15.8px;color:#000000;font-weight:400;font-family:'Liberation Sans',sans-serif;transform:scaleX(1.0630);">7</div>
<div class="t" style="left:361.92px;top:664.57px;font-size:15.8px;line-height:15.8px;color:#000000;font-weight:400;font-family:'Liberation Sans',sans-serif;transform:scaleX(1.0630);">7</div>
<div class="t" style="left:487.92px;top:664.57px;font-size:15.8px;line-height:15.8px;color:#000000;font-weight:400;font-family:'Liberation Sans',sans-serif;transform:scaleX(1.0630);">7</div>
<div class="t" style="left:620.92px;top:664.57px;font-size:15.8px;line-height:15.8px;color:#000000;font-weight:400;font-family:'Liberation Sans',sans-serif;transform:scaleX(1.0630);">7</div>
<div class="t" style="left:739.92px;top:664.57px;font-size:15.8px;line-height:15.8px;color:#000000;font-weight:400;font-family:'Liberation Sans',sans-serif;transform:scaleX(1.0630);">7</div>
<div class="t" style="left:82.75px;top:689.57px;font-size:15.8px;line-height:15.8px;color:#000000;font-weight:400;font-family:'Liberation Sans',sans-serif;transform:scaleX(1.0630);">8</div>
<div class="t" style="left:166.75px;top:689.57px;font-size:15.8px;line-height:15.8px;color:#000000;font-weight:400;font-family:'Liberation Sans',sans-serif;transform:scaleX(1.0630);">8</div>
<div class="t" style="left:361.75px;top:689.57px;font-size:15.8px;line-height:15.8px;color:#000000;font-weight:400;font-family:'Liberation Sans',sans-serif;transform:scaleX(1.0630);">8</div>
<div class="t" style="left:487.75px;top:689.57px;font-size:15.8px;line-height:15.8px;color:#000000;font-weight:400;font-family:'Liberation Sans',sans-serif;transform:scaleX(1.0630);">8</div>
<div class="t" style="left:620.75px;top:689.57px;font-size:15.8px;line-height:15.8px;color:#000000;font-weight:400;font-family:'Liberation Sans',sans-serif;transform:scaleX(1.0630);">8</div>
<div class="t" style="left:739.75px;top:689.57px;font-size:15.8px;line-height:15.8px;color:#000000;font-weight:400;font-family:'Liberation Sans',sans-serif;transform:scaleX(1.0630);">8</div>
<div class="t" style="left:82.83px;top:714.57px;font-size:15.8px;line-height:15.8px;color:#000000;font-weight:400;font-family:'Liberation Sans',sans-serif;transform:scaleX(1.0630);">9</div>
<div class="t" style="left:166.83px;top:714.57px;font-size:15.8px;line-height:15.8px;color:#000000;font-weight:400;font-family:'Liberation Sans',sans-serif;transform:scaleX(1.0630);">9</div>
<div class="t" style="left:361.83px;top:714.57px;font-size:15.8px;line-height:15.8px;color:#000000;font-weight:400;font-family:'Liberation Sans',sans-serif;transform:scaleX(1.0630);">9</div>
<div class="t" style="left:487.83px;top:714.57px;font-size:15.8px;line-height:15.8px;color:#000000;font-weight:400;font-family:'Liberation Sans',sans-serif;transform:scaleX(1.0630);">9</div>
<div class="t" style="left:620.83px;top:714.57px;font-size:15.8px;line-height:15.8px;color:#000000;font-weight:400;font-family:'Liberation Sans',sans-serif;transform:scaleX(1.0630);">9</div>
<div class="t" style="left:739.83px;top:714.57px;font-size:15.8px;line-height:15.8px;color:#000000;font-weight:400;font-family:'Liberation Sans',sans-serif;transform:scaleX(1.0630);">9</div>
<div class="t" style="left:73.34px;top:739.57px;font-size:15.8px;line-height:15.8px;color:#000000;font-weight:400;font-family:'Liberation Sans',sans-serif;transform:scaleX(1.0630);">10</div>
<div class="t" style="left:157.34px;top:739.57px;font-size:15.8px;line-height:15.8px;color:#000000;font-weight:400;font-family:'Liberation Sans',sans-serif;transform:scaleX(1.0630);">10</div>
<div class="t" style="left:352.34px;top:739.57px;font-size:15.8px;line-height:15.8px;color:#000000;font-weight:400;font-family:'Liberation Sans',sans-serif;transform:scaleX(1.0630);">10</div>
<div class="t" style="left:478.34px;top:739.57px;font-size:15.8px;line-height:15.8px;color:#000000;font-weight:400;font-family:'Liberation Sans',sans-serif;transform:scaleX(1.0630);">10</div>
<div class="t" style="left:611.34px;top:739.57px;font-size:15.8px;line-height:15.8px;color:#000000;font-weight:400;font-family:'Liberation Sans',sans-serif;transform:scaleX(1.0630);">10</div>
<div class="t" style="left:730.34px;top:739.57px;font-size:15.8px;line-height:15.8px;color:#000000;font-weight:400;font-family:'Liberation Sans',sans-serif;transform:scaleX(1.0630);">10</div>
<div style="left:-10px;top:607px;width:107px;height:28px;border:2px solid #1e7a44"></div>
<div style="left:92px;top:630px;width:7px;height:7px;background:#1e7a44;border:1px solid #fff"></div>
<div style="left:1471px;top:4px;width:125px;height:30px;background:#262626;border:1px solid #6a6a6a;border-radius:5px"></div>
<svg style="position:absolute;left:1482px;top:12px;overflow:visible;" width="14" height="13" viewBox="0 0 14 13"><path d="M0.7 0.7 H13.3 V9.3 H5.5 L2.5 12.3 V9.3 H0.7 Z" fill="none" stroke="#f0f0f0" stroke-width="1.3" stroke-linejoin="round"/></svg>
<div class="t" style="left:1500.33px;top:10.25px;font-size:17px;line-height:17px;color:#f2f2f2;font-weight:400;font-family:'Liberation Sans',sans-serif;transform:scaleX(1.0254);">Comments</div>
<div style="left:1606px;top:4px;width:101px;height:30px;background:#36a85e;border-radius:5px"></div>
<svg style="position:absolute;left:1616px;top:12px;overflow:visible;" width="15" height="14" viewBox="0 0 15 14"><path d="M0.7 5.5 V13.3 H11.5 V10" fill="none" stroke="#101010" stroke-width="1.3"/><path d="M4 10 C4 6 7 4.5 10.5 4.5 V1.5 L14.3 5.8 L10.5 10 V7 C8 7 5.5 8 4 10 Z" fill="none" stroke="#101010" stroke-width="1.2" stroke-linejoin="round"/></svg>
<div class="t" style="left:1635.97px;top:10.25px;font-size:17px;line-height:17px;color:#0c0c0c;font-weight:400;font-family:'Liberation Sans',sans-serif;transform:scaleX(0.9526);">Share</div>
<svg style="position:absolute;left:1693.0px;top:18.75px;overflow:visible;" width="7.0" height="3.5" viewBox="0 0 7.0 3.5"><path d="M0.3 0.3 L3.5 3.2 L6.7 0.3" fill="none" stroke="#0c0c0c" stroke-width="1.4" stroke-linecap="round" stroke-linejoin="round"/></svg>
<div style="left:-10px;top:52px;width:112px;height:30px;background:#121311;border:1px solid #4e4e4e;border-radius:7px"></div>
<svg style="position:absolute;left:91px;top:65.0px;overflow:visible;" width="8" height="4" viewBox="0 0 8 4"><path d="M0.3 0.3 L4 3.7 L7.7 0.3" fill="none" stroke="#9a9a9a" stroke-width="1.2" stroke-linecap="round" stroke-linejoin="round"/></svg>
<div style="left:106px;top:52px;width:53px;height:30px;background:#121311;border:1px solid #4e4e4e;border-radius:7px"></div>
<div class="t" style="left:107.85px;top:60.25px;font-size:15px;line-height:15px;color:#8a8a8a;font-weight:400;font-family:'Liberation Sans',sans-serif;transform:scaleX(1.0200);">11</div>
<svg style="position:absolute;left:147px;top:65.0px;overflow:visible;" width="8" height="4" viewBox="0 0 8 4"><path d="M0.3 0.3 L4 3.7 L7.7 0.3" fill="none" stroke="#9a9a9a" stroke-width="1.2" stroke-linecap="round" stroke-linejoin="round"/></svg>
<svg style="position:absolute;left:167px;top:57px;overflow:visible;" width="15" height="17" viewBox="0 0 15 17"><path d="M0.8 16.6 L7.2 0.8 L13.6 16.6 M3.2 11 H11.2" fill="none" stroke="#bdbdbd" stroke-width="1.5"/></svg>
<svg style="position:absolute;left:180px;top:57px;overflow:visible;" width="7" height="5" viewBox="0 0 7 5"><path d="M0.5 4 L3.5 0.8 L6.5 4" fill="none" stroke="#bdbdbd" stroke-width="1.2"/></svg>
<svg style="position:absolute;left:201px;top:62px;overflow:visible;" width="12" height="12" viewBox="0 0 12 12"><path d="M0.7 11.6 L6 0.8 L11.3 11.6 M2.6 7.8 H9.4" fill="none" stroke="#bdbdbd" stroke-width="1.4"/></svg>
<svg style="position:absolute;left:212px;top:58px;overflow:visible;" width="7" height="5" viewBox="0 0 7 5"><path d="M0.5 0.8 L3.5 4 L6.5 0.8" fill="none" stroke="#bdbdbd" stroke-width="1.2"/></svg>
<div class="t" style="left:22.05px;top:99.40px;font-size:16px;line-height:16px;color:#bdbdbd;font-weight:400;font-family:'Liberation Sans',sans-serif;transform:scaleX(1.2061);">U</div>
<div style="left:23px;top:114px;width:12px;height:2px;background:#bdbdbd"></div>
<svg style="position:absolute;left:49.5px;top:105.25px;overflow:visible;" width="7.0" height="3.5" viewBox="0 0 7.0 3.5"><path d="M0.3 0.3 L3.5 3.2 L6.7 0.3" fill="none" stroke="#8a8a8a" stroke-width="1.3" stroke-linecap="round" stroke-linejoin="round"/></svg>
<div style="left:66px;top:92px;width:1px;height:30px;background:#555"></div>
<svg style="position:absolute;left:74px;top:97px;overflow:visible;" width="20" height="20" viewBox="0 0 20 20"><path d="M0.5 0.5 H19.5 V16.5 H0.5 Z M10 0.5 V16.5 M0.5 8.5 H19.5" fill="none" stroke="#bdbdbd" stroke-width="1" stroke-dasharray="1.5 1.5"/><rect x="0" y="17" width="20" height="2" fill="#bdbdbd"/></svg>
<svg style="position:absolute;left:103.5px;top:105.25px;overflow:visible;" width="7.0" height="3.5" viewBox="0 0 7.0 3.5"><path d="M0.3 0.3 L3.5 3.2 L6.7 0.3" fill="none" stroke="#ffffff" stroke-width="1.8" stroke-linecap="round" stroke-linejoin="round"/></svg>
<div style="left:120px;top:92px;width:1px;height:30px;background:#555"></div>
<svg style="position:absolute;left:128px;top:96px;overflow:visible;" width="21" height="22" viewBox="0 0 21 22"><path d="M3 10 L9 4.2 L14.8 10 L8.9 16 Z" fill="none" stroke="#bdbdbd" stroke-width="1.3" stroke-linejoin="round"/><path d="M9.3 7.2 V2.3 C9.3 0.5 11.6 0.5 11.6 2.3 V7" fill="none" stroke="#bdbdbd" stroke-width="1.2"/><circle cx="15.4" cy="8.2" r="1.8" fill="#bdbdbd"/><path d="M14.6 8.5 L17.5 9 L17.3 13.5 Z" fill="#bdbdbd"/><rect x="0" y="16" width="20" height="5" fill="#6b6b67"/></svg>
<svg style="position:absolute;left:157.5px;top:105.25px;overflow:visible;" width="7.0" height="3.5" viewBox="0 0 7.0 3.5"><path d="M0.3 0.3 L3.5 3.2 L6.7 0.3" fill="none" stroke="#8a8a8a" stroke-width="1.3" stroke-linecap="round" stroke-linejoin="round"/></svg>
<svg style="position:absolute;left:183px;top:97px;overflow:visible;" width="12" height="14" viewBox="0 0 12 14"><path d="M0.7 13.8 L6 0.8 L11.3 13.8 M2.6 9.3 H9.4" fill="none" stroke="#bdbdbd" stroke-width="1.3"/></svg>
<div style="left:179px;top:112px;width:20px;height:5px;background:#6b6b67"></div>
<svg style="position:absolute;left:208.5px;top:105.25px;overflow:visible;" width="7.0" height="3.5" viewBox="0 0 7.0 3.5"><path d="M0.3 0.3 L3.5 3.2 L6.7 0.3" fill="none" stroke="#8a8a8a" stroke-width="1.3" stroke-linecap="round" stroke-linejoin="round"/></svg>
<div class="t" style="left:63.38px;top:143.03px;font-size:13.5px;line-height:13.5px;color:#f0f0f0;font-weight:400;font-family:'Liberation Sans',sans-serif;transform:scaleX(0.9438);">Font</div>
<svg style="position:absolute;left:218px;top:145px;overflow:visible;" width="10" height="10" viewBox="0 0 10 10"><path d="M0.5 9.5 V0.5 H6 M3 3 L9 9 M9 4.5 V9 H4.5" fill="none" stroke="#6a6a6a" stroke-width="1"/></svg>
<div style="left:232px;top:44px;width:1px;height:111px;background:#5a5a5a"></div>
<div style="left:249px;top:57px;width:18px;height:2px;background:#bdbdbd"></div>
<div style="left:252px;top:62px;width:12px;height:2px;background:#bdbdbd"></div>
<div style="left:249px;top:67px;width:18px;height:2px;background:#bdbdbd"></div>
<div style="left:281px;top:60px;width:18px;height:2px;background:#bdbdbd"></div>
<div style="left:284px;top:65px;width:12px;height:2px;background:#bdbdbd"></div>
<div style="left:281px;top:71px;width:18px;height:2px;background:#bdbdbd"></div>
<div style="left:313px;top:65px;width:18px;height:2px;background:#bdbdbd"></div>
<div style="left:316px;top:70px;width:12px;height:2px;background:#bdbdbd"></div>
<div style="left:313px;top:76px;width:18px;height:2px;background:#bdbdbd"></div>
<div style="left:339px;top:52px;width:1px;height:30px;background:#555"></div>
<svg style="position:absolute;left:346px;top:56px;overflow:visible;" width="22" height="21" viewBox="0 0 22 21"><text x="0.5" y="14.5" font-family="Liberation Sans" font-size="12.5" fill="#bdbdbd" transform="translate(-1 -2.5) rotate(-45 7 10)">ab</text><path d="M6.5 20 L20 6.5 M13.5 6.2 H20.2 V12.9" fill="none" stroke="#bdbdbd" stroke-width="1.3"/></svg>
<svg style="position:absolute;left:374.5px;top:65.25px;overflow:visible;" width="7.0" height="3.5" viewBox="0 0 7.0 3.5"><path d="M0.3 0.3 L3.5 3.2 L6.7 0.3" fill="none" stroke="#7a7a7a" stroke-width="1.3" stroke-linecap="round" stroke-linejoin="round"/></svg>
<div style="left:411px;top:51px;width:1px;height:77px;background:#555"></div>
<svg style="position:absolute;left:426px;top:56px;overflow:visible;" width="20" height="22" viewBox="0 0 20 22"><text x="0" y="10.5" font-family="Liberation Sans" font-size="12.5" fill="#9a9a9a">ab</text><text x="0" y="20" font-family="Liberation Sans" font-size="12.5" fill="#9a9a9a">c</text><path d="M17.5 10 C19.8 13.5 18 17 10.5 17.2 M13.5 14 L10.2 17.2 L13.5 20.4" fill="none" stroke="#9a9a9a" stroke-width="1.4"/></svg>
<div class="t" style="left:449.43px;top:59.56px;font-size:15.7px;line-height:15.7px;color:#7c7c7c;font-weight:400;font-family:'Liberation Sans',sans-serif;transform:scaleX(0.9483);">Wrap Text</div>
<div style="left:249px;top:98px;width:18px;height:2px;background:#bdbdbd"></div>
<div style="left:249px;top:103px;width:13px;height:2px;background:#bdbdbd"></div>
<div style="left:249px;top:108px;width:18px;height:2px;background:#bdbdbd"></div>
<div style="left:249px;top:113px;width:13px;height:2px;background:#bdbdbd"></div>
<div style="left:281px;top:98px;width:18px;height:2px;background:#bdbdbd"></div>
<div style="left:284px;top:103px;width:12px;height:2px;background:#bdbdbd"></div>
<div style="left:281px;top:108px;width:18px;height:2px;background:#bdbdbd"></div>
<div style="left:284px;top:113px;width:12px;height:2px;background:#bdbdbd"></div>
<div style="left:313px;top:98px;width:18px;height:2px;background:#bdbdbd"></div>
<div style="left:318px;top:103px;width:13px;height:2px;background:#bdbdbd"></div>
<div style="left:313px;top:108px;width:18px;height:2px;background:#bdbdbd"></div>
<div style="left:318px;top:113px;width:13px;height:2px;background:#bdbdbd"></div>
<div style="left:339px;top:92px;width:1px;height:30px;background:#555"></div>
<div style="left:348px;top:98px;width:18px;height:2px;background:#bdbdbd"></div>
<div style="left:355px;top:108px;width:11px;height:2px;background:#bdbdbd"></div>
<div style="left:348px;top:113px;width:18px;height:2px;background:#bdbdbd"></div>
<div style="left:355px;top:103px;width:11px;height:2px;background:#bdbdbd"></div>
<svg style="position:absolute;left:348px;top:100px;overflow:visible;" width="7" height="8" viewBox="0 0 7 8"><path d="M6.5 4 H1 M3.8 1 L0.8 4 L3.8 7" fill="none" stroke="#bdbdbd" stroke-width="1.2"/></svg>
<div style="left:380px;top:98px;width:18px;height:2px;background:#bdbdbd"></div>
<div style="left:387px;top:108px;width:11px;height:2px;background:#bdbdbd"></div>
<div style="left:380px;top:113px;width:18px;height:2px;background:#bdbdbd"></div>
<div style="left:387px;top:103px;width:11px;height:2px;background:#bdbdbd"></div>
<svg style="position:absolute;left:380px;top:100px;overflow:visible;" width="7" height="8" viewBox="0 0 7 8"><path d="M0 4 H5.5 M2.8 1 L5.8 4 L2.8 7" fill="none" stroke="#bdbdbd" stroke-width="1.2"/></svg>
<svg style="position:absolute;left:424px;top:97px;overflow:visible;" width="20" height="20" viewBox="0 0 20 20"><rect x="0.8" y="0.8" width="18.4" height="18.4" fill="none" stroke="#bdbdbd" stroke-width="1.6"/><path d="M10 0.8 V19.2" stroke="#bdbdbd" stroke-width="1.2"/><rect x="1" y="4" width="18" height="11" fill="#282826" stroke="#3a8ee0" stroke-width="1.4"/><path d="M4 9.5 H16 M6.5 7 L4 9.5 L6.5 12 M13.5 7 L16 9.5 L13.5 12" fill="none" stroke="#3a8ee0" stroke-width="1.4"/></svg>
<div class="t" style="left:448.03px;top:99.56px;font-size:15.7px;line-height:15.7px;color:#f0f0f0;font-weight:400;font-family:'Liberation Sans',sans-serif;transform:scaleX(0.9678);">Merge &amp; Center</div>
<svg style="position:absolute;left:571.0px;top:105.25px;overflow:visible;" width="7.0" height="3.5" viewBox="0 0 7.0 3.5"><path d="M0.3 0.3 L3.5 3.2 L6.7 0.3" fill="none" stroke="#e0e0e0" stroke-width="1.5" stroke-linecap="round" stroke-linejoin="round"/></svg>
<div class="t" style="left:375.00px;top:143.03px;font-size:13.5px;line-height:13.5px;color:#f0f0f0;font-weight:400;font-family:'Liberation Sans',sans-serif;transform:scaleX(0.9660);">Alignment</div>
<svg style="position:absolute;left:581px;top:145px;overflow:visible;" width="10" height="10" viewBox="0 0 10 10"><path d="M0.5 9.5 V0.5 H6 M3 3 L9 9 M9 4.5 V9 H4.5" fill="none" stroke="#6a6a6a" stroke-width="1"/></svg>
<div style="left:595px;top:44px;width:1px;height:111px;background:#5a5a5a"></div>
<div style="left:606px;top:52px;width:180px;height:30px;background:#121311;border:1px solid #4e4e4e;border-radius:7px"></div>
<div class="t" style="left:608.27px;top:59.56px;font-size:15.7px;line-height:15.7px;color:#858585;font-weight:400;font-family:'Liberation Sans',sans-serif;transform:scaleX(0.9304);">General</div>
<svg style="position:absolute;left:774px;top:65.0px;overflow:visible;" width="8" height="4" viewBox="0 0 8 4"><path d="M0.3 0.3 L4 3.7 L7.7 0.3" fill="none" stroke="#7a7a7a" stroke-width="1.2" stroke-linecap="round" stroke-linejoin="round"/></svg>
<svg style="position:absolute;left:611px;top:100px;overflow:visible;" width="21" height="18" viewBox="0 0 21 18"><rect x="0.8" y="0.8" width="19" height="11" fill="none" stroke="#bdbdbd" stroke-width="1.5"/><text x="2" y="10" font-family="Liberation Sans" font-size="9" font-weight="700" fill="#bdbdbd">CC</text><rect x="10" y="9" width="9" height="8.5" rx="3" fill="#282826" stroke="#e8b04a" stroke-width="1.4"/><path d="M10 12 H19 M10 14.5 H19" stroke="#e8b04a" stroke-width="1"/></svg>
<svg style="position:absolute;left:640.5px;top:105.25px;overflow:visible;" width="7.0" height="3.5" viewBox="0 0 7.0 3.5"><path d="M0.3 0.3 L3.5 3.2 L6.7 0.3" fill="none" stroke="#ffffff" stroke-width="1.6" stroke-linecap="round" stroke-linejoin="round"/></svg>
<svg style="position:absolute;left:662px;top:98px;overflow:visible;" width="20" height="18" viewBox="0 0 20 18"><circle cx="4.3" cy="4.3" r="3.4" fill="none" stroke="#bdbdbd" stroke-width="1.5"/><circle cx="15.7" cy="13.7" r="3.4" fill="none" stroke="#bdbdbd" stroke-width="1.5"/><path d="M15.5 0.6 L4.5 17.4" stroke="#bdbdbd" stroke-width="1.5"/></svg>
<svg style="position:absolute;left:700px;top:99px;overflow:visible;" width="10" height="17" viewBox="0 0 10 17"><circle cx="5" cy="5" r="4" fill="#bdbdbd"/><path d="M8.8 5 C9 10 7 14 3 16" fill="none" stroke="#bdbdbd" stroke-width="2.2"/></svg>
<div style="left:721px;top:92px;width:1px;height:30px;background:#555"></div>
<div class="t" style="left:741.52px;top:95.80px;font-size:12px;line-height:12px;color:#cfcfcf;font-weight:400;font-family:'Liberation Sans',sans-serif;">0</div>
<div class="t" style="left:731.92px;top:105.80px;font-size:12px;line-height:12px;color:#cfcfcf;font-weight:400;font-family:'Liberation Sans',sans-serif;">.00</div>
<svg style="position:absolute;left:729px;top:97px;overflow:visible;" width="12" height="9" viewBox="0 0 12 9"><path d="M11 4.5 H1.5 M5 1 L1.2 4.5 L5 8" fill="none" stroke="#3f95e6" stroke-width="1.5"/></svg>
<div class="t" style="left:762.92px;top:95.80px;font-size:12px;line-height:12px;color:#cfcfcf;font-weight:400;font-family:'Liberation Sans',sans-serif;">.00</div>
<div class="t" style="left:768.92px;top:105.80px;font-size:12px;line-height:12px;color:#cfcfcf;font-weight:400;font-family:'Liberation Sans',sans-serif;">.0</div>
<svg style="position:absolute;left:760px;top:107px;overflow:visible;" width="12" height="9" viewBox="0 0 12 9"><path d="M0.5 4.5 H10 M6.5 1 L10.3 4.5 L6.5 8" fill="none" stroke="#3f95e6" stroke-width="1.5"/></svg>
<div class="t" style="left:660.30px;top:143.03px;font-size:13.5px;line-height:13.5px;color:#f0f0f0;font-weight:400;font-family:'Liberation Sans',sans-serif;transform:scaleX(1.0148);">Number</div>
<svg style="position:absolute;left:781px;top:145px;overflow:visible;" width="10" height="10" viewBox="0 0 10 10"><path d="M0.5 9.5 V0.5 H6 M3 3 L9 9 M9 4.5 V9 H4.5" fill="none" stroke="#6a6a6a" stroke-width="1"/></svg>
<div style="left:795px;top:44px;width:1px;height:111px;background:#5a5a5a"></div>
<svg style="position:absolute;left:834px;top:52px;overflow:visible;" width="37" height="29" viewBox="0 0 37 29"><rect x="1" y="1" width="35" height="27" fill="none" stroke="#bdbdbd" stroke-width="2"/><path d="M7.5 1 V28 M28.5 1 V28 M1 9.5 H36 M1 18.5 H36" stroke="#bdbdbd" stroke-width="1.6"/><rect x="7.5" y="1" width="16" height="8.5" fill="#d01a1a" stroke="#ff6b6b" stroke-width="1"/><rect x="7.5" y="10.5" width="11" height="8" fill="#0f64c0" stroke="#6fb2ff" stroke-width="1"/><rect x="7.5" y="19.5" width="18" height="8.5" fill="#d01a1a" stroke="#ff6b6b" stroke-width="1"/></svg>
<div class="t" style="left:812.22px;top:91.25px;font-size:15px;line-height:15px;color:#f0f0f0;font-weight:400;font-family:'Liberation Sans',sans-serif;transform:scaleX(1.0413);">Conditional</div>
<div class="t" style="left:807.16px;top:111.25px;font-size:15px;line-height:15px;color:#f0f0f0;font-weight:400;font-family:'Liberation Sans',sans-serif;transform:scaleX(1.0342);">Formatting</div>
<svg style="position:absolute;left:886.0px;top:116.25px;overflow:visible;" width="7.0" height="3.5" viewBox="0 0 7.0 3.5"><path d="M0.3 0.3 L3.5 3.2 L6.7 0.3" fill="none" stroke="#e0e0e0" stroke-width="1.4" stroke-linecap="round" stroke-linejoin="round"/></svg>
<svg style="position:absolute;left:917px;top:52px;overflow:visible;" width="40" height="35" viewBox="0 0 40 35"><rect x="1" y="1" width="35" height="27" fill="none" stroke="#bdbdbd" stroke-width="2"/><path d="M12 1 V28 M23.5 1 V28 M1 9.5 H36 M1 18.5 H36" stroke="#bdbdbd" stroke-width="1.6"/><rect x="12" y="10" width="24" height="18" fill="#0f64c0" stroke="#5aa8f0" stroke-width="1"/><path d="M37.5 9.8 C39.5 10.8 38.3 13.6 35.5 16.6 L25.2 27.3 L21.6 23.8 L32 13.2 C34.6 10.6 36.4 9.3 37.5 9.8 Z" fill="#282826" stroke="#bdbdbd" stroke-width="1.7" stroke-linejoin="round"/><path d="M21.2 23.6 L25.4 27.6 C24.6 32.2 19.5 35.2 9.5 34.6 C13 33 14 30.5 15.8 27.6 C17.3 25.2 19.2 23.8 21.2 23.6 Z" fill="#1a6fd0" stroke="#5aa8f0" stroke-width="1.2" stroke-linejoin="round"/></svg>
<div class="t" style="left:901.02px;top:91.25px;font-size:15px;line-height:15px;color:#f0f0f0;font-weight:400;font-family:'Liberation Sans',sans-serif;transform:scaleX(0.9837);">Format as</div>
<div class="t" style="left:909.90px;top:111.25px;font-size:15px;line-height:15px;color:#f0f0f0;font-weight:400;font-family:'Liberation Sans',sans-serif;">Table</div>
<svg style="position:absolute;left:949.5px;top:116.25px;overflow:visible;" width="7.0" height="3.5" viewBox="0 0 7.0 3.5"><path d="M0.3 0.3 L3.5 3.2 L6.7 0.3" fill="none" stroke="#e0e0e0" stroke-width="1.4" stroke-linecap="round" stroke-linejoin="round"/></svg>
<svg style="position:absolute;left:982px;top:52px;overflow:visible;" width="40" height="35" viewBox="0 0 40 35"><rect x="1" y="1" width="35" height="27" fill="none" stroke="#bdbdbd" stroke-width="2"/><path d="M7 1 V28 M29 1 V28 M1 7 H36 M1 22 H36" stroke="#bdbdbd" stroke-width="1.6"/><rect x="7.5" y="7.5" width="22" height="14" fill="#0f64c0" stroke="#5aa8f0" stroke-width="1"/><path d="M37.5 9.8 C39.5 10.8 38.3 13.6 35.5 16.6 L25.2 27.3 L21.6 23.8 L32 13.2 C34.6 10.6 36.4 9.3 37.5 9.8 Z" fill="#282826" stroke="#bdbdbd" stroke-width="1.7" stroke-linejoin="round"/><path d="M21.2 23.6 L25.4 27.6 C24.6 32.2 19.5 35.2 9.5 34.6 C13 33 14 30.5 15.8 27.6 C17.3 25.2 19.2 23.8 21.2 23.6 Z" fill="#1a6fd0" stroke="#5aa8f0" stroke-width="1.2" stroke-linejoin="round"/></svg>
<div class="t" style="left:986.92px;top:91.25px;font-size:15px;line-height:15px;color:#f0f0f0;font-weight:400;font-family:'Liberation Sans',sans-serif;transform:scaleX(1.0343);">Cell</div>
<div class="t" style="left:973.66px;top:111.25px;font-size:15px;line-height:15px;color:#f0f0f0;font-weight:400;font-family:'Liberation Sans',sans-serif;transform:scaleX(0.9452);">Styles</div>
<svg style="position:absolute;left:1017.5px;top:116.25px;overflow:visible;" width="7.0" height="3.5" viewBox="0 0 7.0 3.5"><path d="M0.3 0.3 L3.5 3.2 L6.7 0.3" fill="none" stroke="#e0e0e0" stroke-width="1.4" stroke-linecap="round" stroke-linejoin="round"/></svg>
<div class="t" style="left:899.44px;top:143.53px;font-size:13.5px;line-height:13.5px;color:#f0f0f0;font-weight:400;font-family:'Liberation Sans',sans-serif;transform:scaleX(0.9214);">Styles</div>
<div style="left:1038px;top:44px;width:1px;height:111px;background:#5a5a5a"></div>
<svg style="position:absolute;left:1055px;top:52px;overflow:visible;" width="40" height="29" viewBox="0 0 40 29"><rect x="2" y="1" width="35" height="27" fill="none" stroke="#bdbdbd" stroke-width="2"/><path d="M13.5 1 V28 M25 1 V28 M2 9.5 H37 M2 18.5 H37" stroke="#bdbdbd" stroke-width="1.6"/><rect x="12" y="9.5" width="27" height="9" fill="#0f64c0" stroke="#5aa8f0" stroke-width="1"/><path d="M7 10 L4 14 L7 18 H14 V10 Z" fill="#0f64c0"/><path d="M14 14 H2 M9.5 5.5 L1 14 L9.5 22.5" fill="none" stroke="#4aa0f0" stroke-width="1.5"/></svg>
<div class="t" style="left:1055.85px;top:93.25px;font-size:15px;line-height:15px;color:#f0f0f0;font-weight:400;font-family:'Liberation Sans',sans-serif;">Insert</div>
<svg style="position:absolute;left:1070.5px;top:117.25px;overflow:visible;" width="7.0" height="3.5" viewBox="0 0 7.0 3.5"><path d="M0.3 0.3 L3.5 3.2 L6.7 0.3" fill="none" stroke="#e0e0e0" stroke-width="1.4" stroke-linecap="round" stroke-linejoin="round"/></svg>
<svg style="position:absolute;left:1110px;top:52px;overflow:visible;" width="40" height="29" viewBox="0 0 40 29"><rect x="2" y="1" width="35" height="27" fill="none" stroke="#bdbdbd" stroke-width="2"/><path d="M13.5 1 V28 M25 1 V28 M2 9.5 H37 M2 18.5 H37" stroke="#bdbdbd" stroke-width="1.6"/><rect x="7" y="9.5" width="19" height="9" fill="#0f64c0" stroke="#5aa8f0" stroke-width="1"/><path d="M25 9 L30 14 L25 19" fill="#0f64c0"/><path d="M24.5 7 L37.5 21 M37.5 7 L24.5 21" stroke="#e03838" stroke-width="1.6"/></svg>
<div class="t" style="left:1106.25px;top:93.25px;font-size:15px;line-height:15px;color:#f0f0f0;font-weight:400;font-family:'Liberation Sans',sans-serif;transform:scaleX(1.0440);">Delete</div>
<svg style="position:absolute;left:1125.0px;top:117.25px;overflow:visible;" width="7.0" height="3.5" viewBox="0 0 7.0 3.5"><path d="M0.3 0.3 L3.5 3.2 L6.7 0.3" fill="none" stroke="#e0e0e0" stroke-width="1.4" stroke-linecap="round" stroke-linejoin="round"/></svg>
<svg style="position:absolute;left:1164px;top:46px;overflow:visible;" width="40" height="35" viewBox="0 0 40 35"><rect x="2" y="7" width="35" height="27" fill="none" stroke="#bdbdbd" stroke-width="2"/><path d="M10.5 7 V34 M27.5 7 V34 M2 15.5 H37 M2 24.5 H37" stroke="#bdbdbd" stroke-width="1.6"/><rect x="10.5" y="15.5" width="17" height="9" fill="#0f64c0" stroke="#5aa8f0" stroke-width="1"/><path d="M9 2 H29 M9 0 V4 M29 0 V4" stroke="#4aa0f0" stroke-width="1.6"/></svg>
<div class="t" style="left:1158.39px;top:91.25px;font-size:15px;line-height:15px;color:#f0f0f0;font-weight:400;font-family:'Liberation Sans',sans-serif;transform:scaleX(1.0065);">Format</div>
<svg style="position:absolute;left:1178.5px;top:116.25px;overflow:visible;" width="7.0" height="3.5" viewBox="0 0 7.0 3.5"><path d="M0.3 0.3 L3.5 3.2 L6.7 0.3" fill="none" stroke="#e0e0e0" stroke-width="1.4" stroke-linecap="round" stroke-linejoin="round"/></svg>
<div class="t" style="left:1114.89px;top:143.53px;font-size:13.5px;line-height:13.5px;color:#f0f0f0;font-weight:400;font-family:'Liberation Sans',sans-serif;transform:scaleX(0.8965);">Cells</div>
<div style="left:1218px;top:44px;width:1px;height:111px;background:#5a5a5a"></div>
<svg style="position:absolute;left:1236px;top:48px;overflow:visible;" width="17" height="18" viewBox="0 0 17 18"><path d="M16 3 V0.8 H1 L8.5 9 L1 17.2 H16 V15" fill="none" stroke="#bdbdbd" stroke-width="1.6"/></svg>
<div class="t" style="left:1259.20px;top:49.85px;font-size:15px;line-height:15px;color:#f0f0f0;font-weight:400;font-family:'Liberation Sans',sans-serif;transform:scaleX(0.9926);">AutoSum</div>
<svg style="position:absolute;left:1336.0px;top:56.25px;overflow:visible;" width="7.0" height="3.5" viewBox="0 0 7.0 3.5"><path d="M0.3 0.3 L3.5 3.2 L6.7 0.3" fill="none" stroke="#e0e0e0" stroke-width="1.4" stroke-linecap="round" stroke-linejoin="round"/></svg>
<svg style="position:absolute;left:1234px;top:80px;overflow:visible;" width="21" height="19" viewBox="0 0 21 19"><rect x="0.8" y="0.8" width="19" height="17" fill="none" stroke="#bdbdbd" stroke-width="1.5"/><path d="M1 3.5 H20" stroke="#bdbdbd" stroke-width="1.2"/><path d="M10 6 V14 M6.5 10.5 L10 14 L13.5 10.5" fill="none" stroke="#3f95e6" stroke-width="1.4"/></svg>
<div class="t" style="left:1257.94px;top:81.95px;font-size:15px;line-height:15px;color:#f0f0f0;font-weight:400;font-family:'Liberation Sans',sans-serif;transform:scaleX(1.0501);">Fill</div>
<svg style="position:absolute;left:1283.5px;top:86.75px;overflow:visible;" width="7.0" height="3.5" viewBox="0 0 7.0 3.5"><path d="M0.3 0.3 L3.5 3.2 L6.7 0.3" fill="none" stroke="#e0e0e0" stroke-width="1.4" stroke-linecap="round" stroke-linejoin="round"/></svg>
<svg style="position:absolute;left:1233px;top:110px;overflow:visible;" width="22" height="21" viewBox="0 0 22 21"><path d="M1.5 12.5 L12.5 1.5 L20.5 9.5 L9.5 20.5 Z" fill="none" stroke="#b55ec9" stroke-width="1.4"/><path d="M1.5 12.5 L6 8 L14 16 L9.5 20.5 Z" fill="#8a1fa5" stroke="#b55ec9" stroke-width="1.2"/></svg>
<div class="t" style="left:1258.78px;top:113.75px;font-size:15px;line-height:15px;color:#f0f0f0;font-weight:400;font-family:'Liberation Sans',sans-serif;transform:scaleX(0.9626);">Clear</div>
<svg style="position:absolute;left:1298.0px;top:118.75px;overflow:visible;" width="7.0" height="3.5" viewBox="0 0 7.0 3.5"><path d="M0.3 0.3 L3.5 3.2 L6.7 0.3" fill="none" stroke="#e0e0e0" stroke-width="1.4" stroke-linecap="round" stroke-linejoin="round"/></svg>
<div class="t" style="left:1361.00px;top:51.40px;font-size:16px;line-height:16px;color:#3f95e6;font-weight:400;font-family:'Liberation Sans',sans-serif;transform:scaleX(1.2218);">A</div>
<div class="t" style="left:1361.35px;top:68.40px;font-size:16px;line-height:16px;color:#bdbdbd;font-weight:400;font-family:'Liberation Sans',sans-serif;transform:scaleX(1.3636);">Z</div>
<svg style="position:absolute;left:1376px;top:57px;overflow:visible;" width="22" height="21" viewBox="0 0 22 21"><path d="M1 1 H21 V4 L14 11 V20 H8 V11 L1 4 Z" fill="none" stroke="#bdbdbd" stroke-width="1.6" stroke-linejoin="round"/></svg>
<div class="t" style="left:1356.81px;top:91.25px;font-size:15px;line-height:15px;color:#f0f0f0;font-weight:400;font-family:'Liberation Sans',sans-serif;transform:scaleX(1.0264);">Sort &amp;</div>
<div class="t" style="left:1354.50px;top:111.25px;font-size:15px;line-height:15px;color:#f0f0f0;font-weight:400;font-family:'Liberation Sans',sans-serif;">Filter</div>
<svg style="position:absolute;left:1396.0px;top:115.75px;overflow:visible;" width="7.0" height="3.5" viewBox="0 0 7.0 3.5"><path d="M0.3 0.3 L3.5 3.2 L6.7 0.3" fill="none" stroke="#e0e0e0" stroke-width="1.4" stroke-linecap="round" stroke-linejoin="round"/></svg>
<svg style="position:absolute;left:1416px;top:48px;overflow:visible;" width="40" height="37" viewBox="0 0 40 37"><circle cx="24.5" cy="13.5" r="12.2" fill="none" stroke="#bdbdbd" stroke-width="1.8"/><path d="M15.5 22.5 L2 36" stroke="#bdbdbd" stroke-width="1.8"/></svg>
<div class="t" style="left:1412.97px;top:91.25px;font-size:15px;line-height:15px;color:#f0f0f0;font-weight:400;font-family:'Liberation Sans',sans-serif;transform:scaleX(1.0256);">Find &amp;</div>
<div class="t" style="left:1409.16px;top:111.25px;font-size:15px;line-height:15px;color:#f0f0f0;font-weight:400;font-family:'Liberation Sans',sans-serif;transform:scaleX(0.9541);">Select</div>
<svg style="position:absolute;left:1453.5px;top:115.75px;overflow:visible;" width="7.0" height="3.5" viewBox="0 0 7.0 3.5"><path d="M0.3 0.3 L3.5 3.2 L6.7 0.3" fill="none" stroke="#e0e0e0" stroke-width="1.4" stroke-linecap="round" stroke-linejoin="round"/></svg>
<div class="t" style="left:1326.74px;top:143.53px;font-size:13.5px;line-height:13.5px;color:#f0f0f0;font-weight:400;font-family:'Liberation Sans',sans-serif;transform:scaleX(0.9851);">Editing</div>
<div style="left:1475px;top:44px;width:1px;height:111px;background:#5a5a5a"></div>
<svg style="position:absolute;left:1496px;top:48px;overflow:visible;" width="37" height="36" viewBox="0 0 37 36"><rect x="1" y="1" width="34" height="34" fill="none" stroke="#c8431c" stroke-width="2"/><rect x="5" y="5" width="12" height="12" fill="none" stroke="#c8431c" stroke-width="2"/><rect x="20" y="5" width="12" height="12" fill="none" stroke="#c8431c" stroke-width="2"/><rect x="5" y="20" width="12" height="12" fill="none" stroke="#c8431c" stroke-width="2"/><rect x="20" y="20" width="12" height="12" fill="none" stroke="#c8431c" stroke-width="2"/></svg>
<div class="t" style="left:1488.00px;top:91.05px;font-size:15px;line-height:15px;color:#f0f0f0;font-weight:400;font-family:'Liberation Sans',sans-serif;transform:scaleX(1.0313);">Add-ins</div>
<div class="t" style="left:1491.20px;top:143.03px;font-size:13.5px;line-height:13.5px;color:#f0f0f0;font-weight:400;font-family:'Liberation Sans',sans-serif;transform:scaleX(0.9825);">Add-ins</div>
<div style="left:1552px;top:44px;width:1px;height:111px;background:#5a5a5a"></div>
<svg style="position:absolute;left:1571px;top:46px;overflow:visible;" width="41" height="41" viewBox="0 0 41 41"><rect x="1" y="1" width="39" height="39" fill="none" stroke="#bdbdbd" stroke-width="2"/><rect x="1" y="1" width="39" height="5" fill="#8a8a8a"/><path d="M1 17 H40 M1 28 H40 M13 28 V40 M27 28 V40" stroke="#bdbdbd" stroke-width="1.4"/><circle cx="19" cy="17" r="12" fill="#282826" stroke="#bdbdbd" stroke-width="2"/><path d="M27.5 25.5 L40 39" stroke="#bdbdbd" stroke-width="2"/><rect x="12" y="14" width="4" height="8" fill="#8a8a8a"/><rect x="16" y="10" width="5" height="12" fill="#d8d8d8"/><rect x="21" y="12" width="4" height="10" fill="#2f8de6"/></svg>
<div class="t" style="left:1565.20px;top:91.25px;font-size:15px;line-height:15px;color:#f0f0f0;font-weight:400;font-family:'Liberation Sans',sans-serif;transform:scaleX(0.9839);">Analyze</div>
<div class="t" style="left:1574.28px;top:110.65px;font-size:15px;line-height:15px;color:#f0f0f0;font-weight:400;font-family:'Liberation Sans',sans-serif;transform:scaleX(1.0148);">Data</div>
<div style="left:1629px;top:44px;width:1px;height:111px;background:#5a5a5a"></div>
<svg style="position:absolute;left:1688px;top:141px;overflow:visible;" width="13" height="8" viewBox="0 0 13 8"><path d="M0.8 0.8 L6.5 6.5 L12.2 0.8" fill="none" stroke="#e8e8e8" stroke-width="1.5"/></svg>
<svg style="position:absolute;left:-2px;top:179px;overflow:visible;" width="22" height="15" viewBox="0 0 22 15"><path d="M0 8 L6 14 L20 1" fill="none" stroke="#9a9a9a" stroke-width="1.4"/></svg>
<div class="t" style="left:31.26px;top:177.25px;font-size:20px;line-height:20px;color:#bdbdbd;font-weight:400;font-family:'Liberation Serif',serif;font-style:italic;transform:scaleX(1.2057);">fx</div>
<div class="t" style="left:74.20px;top:180.57px;font-size:15.5px;line-height:15.5px;color:#ffffff;font-weight:400;font-family:'Liberation Sans',sans-serif;transform:scaleX(1.0276);">=ROW() - 11</div>
<svg style="position:absolute;left:1694px;top:183px;overflow:visible;" width="14" height="8" viewBox="0 0 14 8"><path d="M0.8 0.8 L7 6.8 L13.2 0.8" fill="none" stroke="#bdbdbd" stroke-width="1.4"/></svg>
<div style="left:823px;top:169px;width:796px;height:622px;border-radius:8px;box-shadow:10px 30px 75px 0px rgba(0,0,0,0.26),2px 4px 14px rgba(0,0,0,0.16)"></div>
<div style="left:823px;top:169px;width:796px;height:622px;background:#eeefed;border-radius:8px;overflow:hidden"></div>
<div style="left:823px;top:169px;width:796px;height:38px;border-radius:8px 8px 0 0;background:linear-gradient(to right,#f1f1f5 0%,#eff2f5 12%,#e6f6f8 35%,#e9f6ef 65%,#ebf7ec 100%)"></div>
<div class="t" style="left:832.40px;top:180.42px;font-size:15.5px;line-height:15.5px;color:#1b1b1b;font-weight:400;font-family:'Liberation Sans',sans-serif;transform:scaleX(0.9645);">Edit Formatting Rule</div>
<div class="t" style="left:1527.68px;top:180.45px;font-size:15px;line-height:15px;color:#1b1b1b;font-weight:400;font-family:'Liberation Sans',sans-serif;transform:scaleX(1.0278);">?</div>
<svg style="position:absolute;left:1582px;top:182px;overflow:visible;" width="14" height="13" viewBox="0 0 14 13"><path d="M0.7 0.7 L13.3 12.3 M13.3 0.7 L0.7 12.3" stroke="#1b1b1b" stroke-width="1.3"/></svg>
<div class="t" style="left:831.58px;top:221.10px;font-size:14px;line-height:14px;color:#1b1b1b;font-weight:400;font-family:'Liberation Sans',sans-serif;transform:scaleX(0.9831);">Select a Rule Type:</div>
<div style="left:832px;top:235px;width:8px;height:1px;background:#1b1b1b"></div>
<div style="left:830px;top:240px;width:782px;height:142px;background:#ffffff;border:2px solid #72767c"></div>
<div style="left:832px;top:243px;width:776px;height:22px;background:#e2e0e4"></div>
<svg style="position:absolute;left:842px;top:252.3px;overflow:visible;" width="11" height="7" viewBox="0 0 11 7"><path d="M0.8 0.8 L5.5 2.9 H10.2 V4.3 H5.5 L0.8 6.2 Z" fill="#1b1b1b"/></svg>
<div class="t" style="left:856.15px;top:248.90px;font-size:14px;line-height:14px;color:#1b1b1b;font-weight:400;font-family:'Liberation Sans',sans-serif;transform:scaleX(1.0247);">Format all cells based on their values</div>
<div style="left:832px;top:266.2px;width:776px;height:1px;background:#ebebeb"></div>
<svg style="position:absolute;left:842px;top:274.7px;overflow:visible;" width="11" height="7" viewBox="0 0 11 7"><path d="M0.8 0.8 L5.5 2.9 H10.2 V4.3 H5.5 L0.8 6.2 Z" fill="#1b1b1b"/></svg>
<div class="t" style="left:856.12px;top:271.30px;font-size:14px;line-height:14px;color:#1b1b1b;font-weight:400;font-family:'Liberation Sans',sans-serif;transform:scaleX(1.0492);">Format only cells that contain</div>
<div style="left:832px;top:288.6px;width:776px;height:1px;background:#ebebeb"></div>
<svg style="position:absolute;left:842px;top:297.1px;overflow:visible;" width="11" height="7" viewBox="0 0 11 7"><path d="M0.8 0.8 L5.5 2.9 H10.2 V4.3 H5.5 L0.8 6.2 Z" fill="#1b1b1b"/></svg>
<div class="t" style="left:856.12px;top:293.70px;font-size:14px;line-height:14px;color:#1b1b1b;font-weight:400;font-family:'Liberation Sans',sans-serif;transform:scaleX(1.0518);">Format only top or bottom ranked values</div>
<div style="left:832px;top:311.0px;width:776px;height:1px;background:#ebebeb"></div>
<svg style="position:absolute;left:842px;top:319.5px;overflow:visible;" width="11" height="7" viewBox="0 0 11 7"><path d="M0.8 0.8 L5.5 2.9 H10.2 V4.3 H5.5 L0.8 6.2 Z" fill="#1b1b1b"/></svg>
<div class="t" style="left:856.15px;top:316.10px;font-size:14px;line-height:14px;color:#1b1b1b;font-weight:400;font-family:'Liberation Sans',sans-serif;transform:scaleX(1.0285);">Format only values that are above or below average</div>
<div style="left:832px;top:333.4px;width:776px;height:1px;background:#ebebeb"></div>
<svg style="position:absolute;left:842px;top:341.9px;overflow:visible;" width="11" height="7" viewBox="0 0 11 7"><path d="M0.8 0.8 L5.5 2.9 H10.2 V4.3 H5.5 L0.8 6.2 Z" fill="#1b1b1b"/></svg>
<div class="t" style="left:856.13px;top:338.50px;font-size:14px;line-height:14px;color:#1b1b1b;font-weight:400;font-family:'Liberation Sans',sans-serif;transform:scaleX(1.0476);">Format only unique or duplicate values</div>
<div style="left:832px;top:355.8px;width:776px;height:1px;background:#ebebeb"></div>
<svg style="position:absolute;left:842px;top:364.3px;overflow:visible;" width="11" height="7" viewBox="0 0 11 7"><path d="M0.8 0.8 L5.5 2.9 H10.2 V4.3 H5.5 L0.8 6.2 Z" fill="#1b1b1b"/></svg>
<div class="t" style="left:856.20px;top:360.90px;font-size:14px;line-height:14px;color:#1b1b1b;font-weight:400;font-family:'Liberation Sans',sans-serif;transform:scaleX(1.0435);">Use a formula to determine which cells to format</div>
<div class="t" style="left:830.73px;top:401.80px;font-size:14px;line-height:14px;color:#1b1b1b;font-weight:400;font-family:'Liberation Sans',sans-serif;transform:scaleX(1.0486);">Edit the Rule Description:</div>
<div style="left:832px;top:416px;width:8px;height:1px;background:#1b1b1b"></div>
<div style="left:830px;top:421px;width:782px;height:328px;background:#ffffff;border:2px solid #868a90"></div>
<div class="t" style="left:842.73px;top:434.42px;font-size:12.8px;line-height:12.8px;color:#1b1b1b;font-weight:700;font-family:'Liberation Sans',sans-serif;transform:scaleX(1.0504);">Format all cells based on their values:</div>
<div class="t" style="left:842.48px;top:454.00px;font-size:14px;line-height:14px;color:#1b1b1b;font-weight:400;font-family:'Liberation Sans',sans-serif;transform:scaleX(1.0031);">Format Style:</div>
<div style="left:851px;top:468px;width:8px;height:1px;background:#1b1b1b"></div>
<div style="left:938px;top:452px;width:161px;height:26px;background:#ffffff;border:1px solid #a9adb0"></div>
<div style="left:1076px;top:455px;width:20px;height:20px;background:#f7f8f7;border:1px solid #d6d8d6;border-radius:2px"></div>
<svg style="position:absolute;left:1081.0px;top:462.0px;overflow:visible;" width="10" height="6" viewBox="0 0 10 6"><path d="M0.6 0.6 L5 5.2 L9.4 0.6" fill="none" stroke="#5a5a5a" stroke-width="1.1"/></svg>
<div class="t" style="left:942.39px;top:457.80px;font-size:14px;line-height:14px;color:#1b1b1b;font-weight:400;font-family:'Liberation Sans',sans-serif;transform:scaleX(0.9889);">Data Bar</div>
<div style="left:1110px;top:453px;width:17px;height:17px;background:#eef0ee;border:1.5px solid #6d6f6d;border-radius:3px"></div>
<div class="t" style="left:1134.96px;top:454.80px;font-size:14px;line-height:14px;color:#1b1b1b;font-weight:400;font-family:'Liberation Sans',sans-serif;transform:scaleX(1.0102);">Show Bar Only</div>
<div style="left:1175px;top:469px;width:8px;height:1px;background:#1b1b1b"></div>
<div class="t" style="left:896.40px;top:488.50px;font-size:14px;line-height:14px;color:#1b1b1b;font-weight:400;font-family:'Liberation Sans',sans-serif;transform:scaleX(1.0710);">Minimum</div>
<div class="t" style="left:1253.14px;top:488.70px;font-size:14px;line-height:14px;color:#1b1b1b;font-weight:400;font-family:'Liberation Sans',sans-serif;transform:scaleX(1.0331);">Maximum</div>
<div class="t" style="left:842.72px;top:513.60px;font-size:14px;line-height:14px;color:#1b1b1b;font-weight:400;font-family:'Liberation Sans',sans-serif;transform:scaleX(1.0064);">Type:</div>
<div style="left:843px;top:528px;width:8px;height:1px;background:#1b1b1b"></div>
<div style="left:896px;top:507px;width:346px;height:26px;background:#ffffff;border:1px solid #a9adb0"></div>
<div style="left:1219px;top:510px;width:20px;height:20px;background:#f7f8f7;border:1px solid #d6d8d6;border-radius:2px"></div>
<svg style="position:absolute;left:1224.0px;top:517.0px;overflow:visible;" width="10" height="6" viewBox="0 0 10 6"><path d="M0.6 0.6 L5 5.2 L9.4 0.6" fill="none" stroke="#5a5a5a" stroke-width="1.1"/></svg>
<div class="t" style="left:899.75px;top:512.80px;font-size:14px;line-height:14px;color:#1b1b1b;font-weight:400;font-family:'Liberation Sans',sans-serif;transform:scaleX(1.0311);">Lowest Value</div>
<div class="t" style="left:842.93px;top:543.80px;font-size:14px;line-height:14px;color:#1b1b1b;font-weight:400;font-family:'Liberation Sans',sans-serif;transform:scaleX(1.0560);">Value:</div>
<div style="left:843px;top:558px;width:8px;height:1px;background:#1b1b1b"></div>
<div style="left:896px;top:537px;width:346px;height:26px;background:#ffffff;border:1px solid #a9adb0"></div>
<div style="left:1215px;top:539px;width:25px;height:23px;background:#fbfbfb;border:1px solid #d0d2d0;border-radius:4px"></div>
<svg style="position:absolute;left:1221.5px;top:543px;overflow:visible;" width="12" height="14" viewBox="0 0 12 14"><path d="M6 12 V3 M1.5 6.5 L6 1.5 L10.5 6.5" fill="none" stroke="#111" stroke-width="2"/><path d="M0.5 13 H11.5" stroke="#111" stroke-width="1.5"/></svg>
<div class="t" style="left:900.06px;top:543.10px;font-size:14px;line-height:14px;color:#7d7d7d;font-weight:400;font-family:'Liberation Sans',sans-serif;transform:scaleX(0.9942);">(Lowest value)</div>
<div style="left:1253px;top:507px;width:345px;height:26px;background:#ffffff;border:1px solid #a9adb0"></div>
<div style="left:1575px;top:510px;width:20px;height:20px;background:#f7f8f7;border:1px solid #d6d8d6;border-radius:2px"></div>
<svg style="position:absolute;left:1580.0px;top:517.0px;overflow:visible;" width="10" height="6" viewBox="0 0 10 6"><path d="M0.6 0.6 L5 5.2 L9.4 0.6" fill="none" stroke="#5a5a5a" stroke-width="1.1"/></svg>
<div class="t" style="left:1257.12px;top:512.80px;font-size:14px;line-height:14px;color:#1b1b1b;font-weight:400;font-family:'Liberation Sans',sans-serif;transform:scaleX(1.0563);">Highest Value</div>
<div style="left:1253px;top:537px;width:345px;height:26px;background:#ffffff;border:1px solid #a9adb0"></div>
<div style="left:1571px;top:539px;width:24px;height:23px;background:#fbfbfb;border:1px solid #d0d2d0;border-radius:4px"></div>
<svg style="position:absolute;left:1577.0px;top:543px;overflow:visible;" width="12" height="14" viewBox="0 0 12 14"><path d="M6 12 V3 M1.5 6.5 L6 1.5 L10.5 6.5" fill="none" stroke="#111" stroke-width="2"/><path d="M0.5 13 H11.5" stroke="#111" stroke-width="1.5"/></svg>
<div class="t" style="left:1257.44px;top:543.10px;font-size:14px;line-height:14px;color:#7d7d7d;font-weight:400;font-family:'Liberation Sans',sans-serif;transform:scaleX(1.0184);">(Highest value)</div>
<div class="t" style="left:842.73px;top:589.62px;font-size:12.8px;line-height:12.8px;color:#1b1b1b;font-weight:700;font-family:'Liberation Sans',sans-serif;transform:scaleX(1.0510);">Bar Appearance:</div>
<div class="t" style="left:842.00px;top:613.90px;font-size:14px;line-height:14px;color:#1b1b1b;font-weight:400;font-family:'Liberation Sans',sans-serif;transform:scaleX(1.1568);">Fill</div>
<div style="left:843px;top:628px;width:7px;height:1px;background:#1b1b1b"></div>
<div style="left:842px;top:632px;width:142px;height:26px;background:#ffffff;border:1px solid #a9adb0"></div>
<div style="left:961px;top:635px;width:20px;height:20px;background:#f7f8f7;border:1px solid #d6d8d6;border-radius:2px"></div>
<svg style="position:absolute;left:966.0px;top:642.0px;overflow:visible;" width="10" height="6" viewBox="0 0 10 6"><path d="M0.6 0.6 L5 5.2 L9.4 0.6" fill="none" stroke="#5a5a5a" stroke-width="1.1"/></svg>
<div class="t" style="left:846.87px;top:637.80px;font-size:14px;line-height:14px;color:#1b1b1b;font-weight:400;font-family:'Liberation Sans',sans-serif;transform:scaleX(1.0494);">Gradient Fill</div>
<div class="t" style="left:996.36px;top:613.90px;font-size:14px;line-height:14px;color:#1b1b1b;font-weight:400;font-family:'Liberation Sans',sans-serif;transform:scaleX(1.0591);">Color</div>
<div style="left:997px;top:628px;width:9px;height:1px;background:#1b1b1b"></div>
<div style="left:996px;top:632px;width:142px;height:26px;background:#ffffff;border:1px solid #a9adb0"></div>
<div style="left:1115px;top:635px;width:20px;height:20px;background:#f7f8f7;border:1px solid #d6d8d6;border-radius:2px"></div>
<svg style="position:absolute;left:1120.0px;top:642.0px;overflow:visible;" width="10" height="6" viewBox="0 0 10 6"><path d="M0.6 0.6 L5 5.2 L9.4 0.6" fill="none" stroke="#5a5a5a" stroke-width="1.1"/></svg>
<div style="left:998px;top:635px;width:114px;height:20px;background:#ed7d31"></div>
<div class="t" style="left:1303.54px;top:614.00px;font-size:14px;line-height:14px;color:#1b1b1b;font-weight:400;font-family:'Liberation Sans',sans-serif;transform:scaleX(1.0401);">Border</div>
<div style="left:1319px;top:628px;width:8px;height:1px;background:#1b1b1b"></div>
<div style="left:1303px;top:632px;width:142px;height:26px;background:#ffffff;border:1px solid #a9adb0"></div>
<div style="left:1422px;top:635px;width:20px;height:20px;background:#f7f8f7;border:1px solid #d6d8d6;border-radius:2px"></div>
<svg style="position:absolute;left:1427.0px;top:642.0px;overflow:visible;" width="10" height="6" viewBox="0 0 10 6"><path d="M0.6 0.6 L5 5.2 L9.4 0.6" fill="none" stroke="#5a5a5a" stroke-width="1.1"/></svg>
<div class="t" style="left:1307.86px;top:637.30px;font-size:14px;line-height:14px;color:#1b1b1b;font-weight:400;font-family:'Liberation Sans',sans-serif;transform:scaleX(1.0215);">Solid Border</div>
<div class="t" style="left:1457.56px;top:614.00px;font-size:14px;line-height:14px;color:#1b1b1b;font-weight:400;font-family:'Liberation Sans',sans-serif;transform:scaleX(1.0591);">Color</div>
<div style="left:1472px;top:628px;width:5px;height:1px;background:#1b1b1b"></div>
<div style="left:1457px;top:632px;width:141px;height:26px;background:#ffffff;border:1px solid #a9adb0"></div>
<div style="left:1575px;top:635px;width:20px;height:20px;background:#f7f8f7;border:1px solid #d6d8d6;border-radius:2px"></div>
<svg style="position:absolute;left:1580.0px;top:642.0px;overflow:visible;" width="10" height="6" viewBox="0 0 10 6"><path d="M0.6 0.6 L5 5.2 L9.4 0.6" fill="none" stroke="#5a5a5a" stroke-width="1.1"/></svg>
<div style="left:1459px;top:636px;width:113px;height:19px;background:#008000"></div>
<div style="left:843px;top:676px;width:160px;height:26px;background:#f6f7f6;border:1px solid #cfd1cf;border-radius:4px"></div>
<div class="t" style="left:853.23px;top:682.70px;font-size:14px;line-height:14px;color:#1b1b1b;font-weight:400;font-family:'Liberation Sans',sans-serif;transform:scaleX(1.0416);">Negative Value and Axis...</div>
<div style="left:854px;top:697px;width:10px;height:1px;background:#1b1b1b"></div>
<div class="t" style="left:1377.15px;top:682.40px;font-size:14px;line-height:14px;color:#1b1b1b;font-weight:400;font-family:'Liberation Sans',sans-serif;transform:scaleX(1.0280);">Bar Direction:</div>
<div style="left:1402px;top:696px;width:9px;height:1px;background:#1b1b1b"></div>
<div style="left:1476px;top:675px;width:122px;height:26px;background:#ffffff;border:1px solid #a9adb0"></div>
<div style="left:1575px;top:678px;width:20px;height:20px;background:#f7f8f7;border:1px solid #d6d8d6;border-radius:2px"></div>
<svg style="position:absolute;left:1580.0px;top:685.0px;overflow:visible;" width="10" height="6" viewBox="0 0 10 6"><path d="M0.6 0.6 L5 5.2 L9.4 0.6" fill="none" stroke="#5a5a5a" stroke-width="1.1"/></svg>
<div class="t" style="left:1481.59px;top:680.70px;font-size:14px;line-height:14px;color:#1b1b1b;font-weight:400;font-family:'Liberation Sans',sans-serif;transform:scaleX(1.0198);">Context</div>
<div class="t" style="left:842.31px;top:722.32px;font-size:12.8px;line-height:12.8px;color:#1b1b1b;font-weight:700;font-family:'Liberation Sans',sans-serif;transform:scaleX(1.0740);">Preview:</div>
<div style="left:910px;top:716px;width:688px;height:25px;background:#ffffff;border:1px solid #767676"></div>
<div style="left:914px;top:720px;width:680px;height:17px;border:1px solid #e2e4e2"></div>
<div style="left:917px;top:722px;width:507px;height:13px;border:1px solid #2e9a3a;background:linear-gradient(to right,#ed7d31 0%,#ef8d50 25%,#f4b48f 50%,#f9d8c4 75%,#fbe8dc 100%)"></div>
<div style="left:1408px;top:755px;width:91px;height:26px;background:#fbfbfb;border:1px solid #d0d2d0;border-radius:4px"></div>
<div class="t" style="left:1444.00px;top:762.30px;font-size:14px;line-height:14px;color:#1b1b1b;font-weight:400;font-family:'Liberation Sans',sans-serif;transform:scaleX(0.9455);">OK</div>
<div style="left:1513px;top:755px;width:91px;height:26px;background:#fbfbfb;border:1px solid #d0d2d0;border-radius:4px"></div>
<div class="t" style="left:1536.51px;top:762.30px;font-size:14px;line-height:14px;color:#1b1b1b;font-weight:400;font-family:'Liberation Sans',sans-serif;transform:scaleX(0.9921);">Cancel</div>
<div style="left:1613px;top:774px;width:2px;height:2px;background:#b8b8b8"></div>
<div style="left:1608px;top:779px;width:2px;height:2px;background:#b8b8b8"></div>
<div style="left:1613px;top:779px;width:2px;height:2px;background:#b8b8b8"></div>
<div style="left:1603px;top:784px;width:2px;height:2px;background:#b8b8b8"></div>
<div style="left:1608px;top:784px;width:2px;height:2px;background:#b8b8b8"></div>
<div style="left:1613px;top:784px;width:2px;height:2px;background:#b8b8b8"></div>
<div style="left:997px;top:658px;width:217px;height:240px;background:#262626;border-radius:10px 10px 0 0;border-top:1px solid #e03030;border-left:1px solid #c02828"></div>
<div class="t" style="left:1014.86px;top:672.52px;font-size:13.5px;line-height:13.5px;color:#f4f4f4;font-weight:700;font-family:'Liberation Sans',sans-serif;transform:scaleX(1.0694);">Theme Colors</div>
<div style="left:1001px;top:699px;width:15px;height:16px;background:#ffffff;border:1px solid #3e3e3e"></div>
<div style="left:1001px;top:731px;width:15px;height:82px;border:1px solid #3e3e3e;background:linear-gradient(to bottom,#f2f2f2 0 16px,#d9d9d9 16px 32px,#bfbfbf 32px 48px,#a6a6a6 48px 64px,#808080 64px 80px)"></div>
<div style="left:1001px;top:869px;width:15px;height:16px;background:#d01515;border:1px solid #3e3e3e"></div>
<div style="left:1023px;top:699px;width:15px;height:16px;background:#000000;border:1px solid #3e3e3e"></div>
<div style="left:1023px;top:731px;width:15px;height:82px;border:1px solid #3e3e3e;background:linear-gradient(to bottom,#808080 0 16px,#595959 16px 32px,#404040 32px 48px,#262626 48px 64px,#0d0d0d 64px 80px)"></div>
<div style="left:1023px;top:869px;width:15px;height:16px;background:#ff0000;border:1px solid #3e3e3e"></div>
<div style="left:1044px;top:699px;width:15px;height:16px;background:#e7e6e6;border:1px solid #3e3e3e"></div>
<div style="left:1044px;top:731px;width:15px;height:82px;border:1px solid #3e3e3e;background:linear-gradient(to bottom,#d0cece 0 16px,#aeaaaa 16px 32px,#757171 32px 48px,#3a3838 48px 64px,#171616 64px 80px)"></div>
<div style="left:1044px;top:869px;width:15px;height:16px;background:#ffc000;border:1px solid #3e3e3e"></div>
<div style="left:1066px;top:699px;width:15px;height:16px;background:#44546a;border:1px solid #3e3e3e"></div>
<div style="left:1066px;top:731px;width:15px;height:82px;border:1px solid #3e3e3e;background:linear-gradient(to bottom,#d6dce5 0 16px,#adb9ca 16px 32px,#8497b0 32px 48px,#333f50 48px 64px,#222b35 64px 80px)"></div>
<div style="left:1066px;top:869px;width:15px;height:16px;background:#ffff00;border:1px solid #3e3e3e"></div>
<div style="left:1087px;top:699px;width:15px;height:16px;background:#0b63c5;border:1px solid #3e3e3e"></div>
<div style="left:1087px;top:731px;width:15px;height:82px;border:1px solid #3e3e3e;background:linear-gradient(to bottom,#dae3f3 0 16px,#b4c7e7 16px 32px,#8faadc 32px 48px,#3f4f9a 48px 64px,#203864 64px 80px)"></div>
<div style="left:1087px;top:869px;width:15px;height:16px;background:#92d050;border:1px solid #3e3e3e"></div>
<div style="left:1108px;top:699px;width:15px;height:16px;background:#ed7d31;border:1px solid #3e3e3e"></div>
<div style="left:1108px;top:731px;width:15px;height:82px;border:1px solid #3e3e3e;background:linear-gradient(to bottom,#fbe5d6 0 16px,#f8cbad 16px 32px,#f4b183 32px 48px,#c55a11 48px 64px,#843c0c 64px 80px)"></div>
<div style="left:1108px;top:869px;width:15px;height:16px;background:#00b050;border:1px solid #3e3e3e"></div>
<div style="left:1130px;top:699px;width:15px;height:16px;background:#a5a5a5;border:1px solid #3e3e3e"></div>
<div style="left:1130px;top:731px;width:15px;height:82px;border:1px solid #3e3e3e;background:linear-gradient(to bottom,#ededed 0 16px,#dbdbdb 16px 32px,#c9c9c9 32px 48px,#7b7b7b 48px 64px,#525252 64px 80px)"></div>
<div style="left:1130px;top:869px;width:15px;height:16px;background:#00b0f0;border:1px solid #3e3e3e"></div>
<div style="left:1151px;top:699px;width:15px;height:16px;background:#ffc000;border:1px solid #3e3e3e"></div>
<div style="left:1151px;top:731px;width:15px;height:82px;border:1px solid #3e3e3e;background:linear-gradient(to bottom,#fff2cc 0 16px,#ffe699 16px 32px,#ffd966 32px 48px,#bf9000 48px 64px,#7f6000 64px 80px)"></div>
<div style="left:1151px;top:869px;width:15px;height:16px;background:#0a6cc4;border:1px solid #3e3e3e"></div>
<div style="left:1172px;top:699px;width:15px;height:16px;background:#4d8fd0;border:1px solid #3e3e3e"></div>
<div style="left:1172px;top:731px;width:15px;height:82px;border:1px solid #3e3e3e;background:linear-gradient(to bottom,#deebf7 0 16px,#bdd7ee 16px 32px,#9dc3e6 32px 48px,#2e75b6 48px 64px,#1f4e79 64px 80px)"></div>
<div style="left:1172px;top:869px;width:15px;height:16px;background:#002060;border:1px solid #3e3e3e"></div>
<div style="left:1194px;top:699px;width:15px;height:16px;background:#70ad47;border:1px solid #3e3e3e"></div>
<div style="left:1194px;top:731px;width:15px;height:82px;border:1px solid #3e3e3e;background:linear-gradient(to bottom,#e2f0d9 0 16px,#c5e0b4 16px 32px,#a9d18e 32px 48px,#548235 48px 64px,#385723 64px 80px)"></div>
<div style="left:1194px;top:869px;width:15px;height:16px;background:#7030a0;border:1px solid #3e3e3e"></div>
<div class="t" style="left:1014.58px;top:842.52px;font-size:13.5px;line-height:13.5px;color:#f4f4f4;font-weight:700;font-family:'Liberation Sans',sans-serif;transform:scaleX(1.0453);">Standard Colors</div>
<div style="left:1108px;top:700px;width:16px;height:16px;background:#ed7d31;border:1px solid #b8520f;box-shadow:inset 0 0 0 1px #ffe9b0"></div>
<div style="left:991px;top:652px;width:228px;height:179px;border:5px solid #1faa48;border-radius:16px"></div>
<div style="left:1100px;top:689px;width:32px;height:39px;border:4.5px solid #1faa48;border-radius:9px"></div>
</body></html>
